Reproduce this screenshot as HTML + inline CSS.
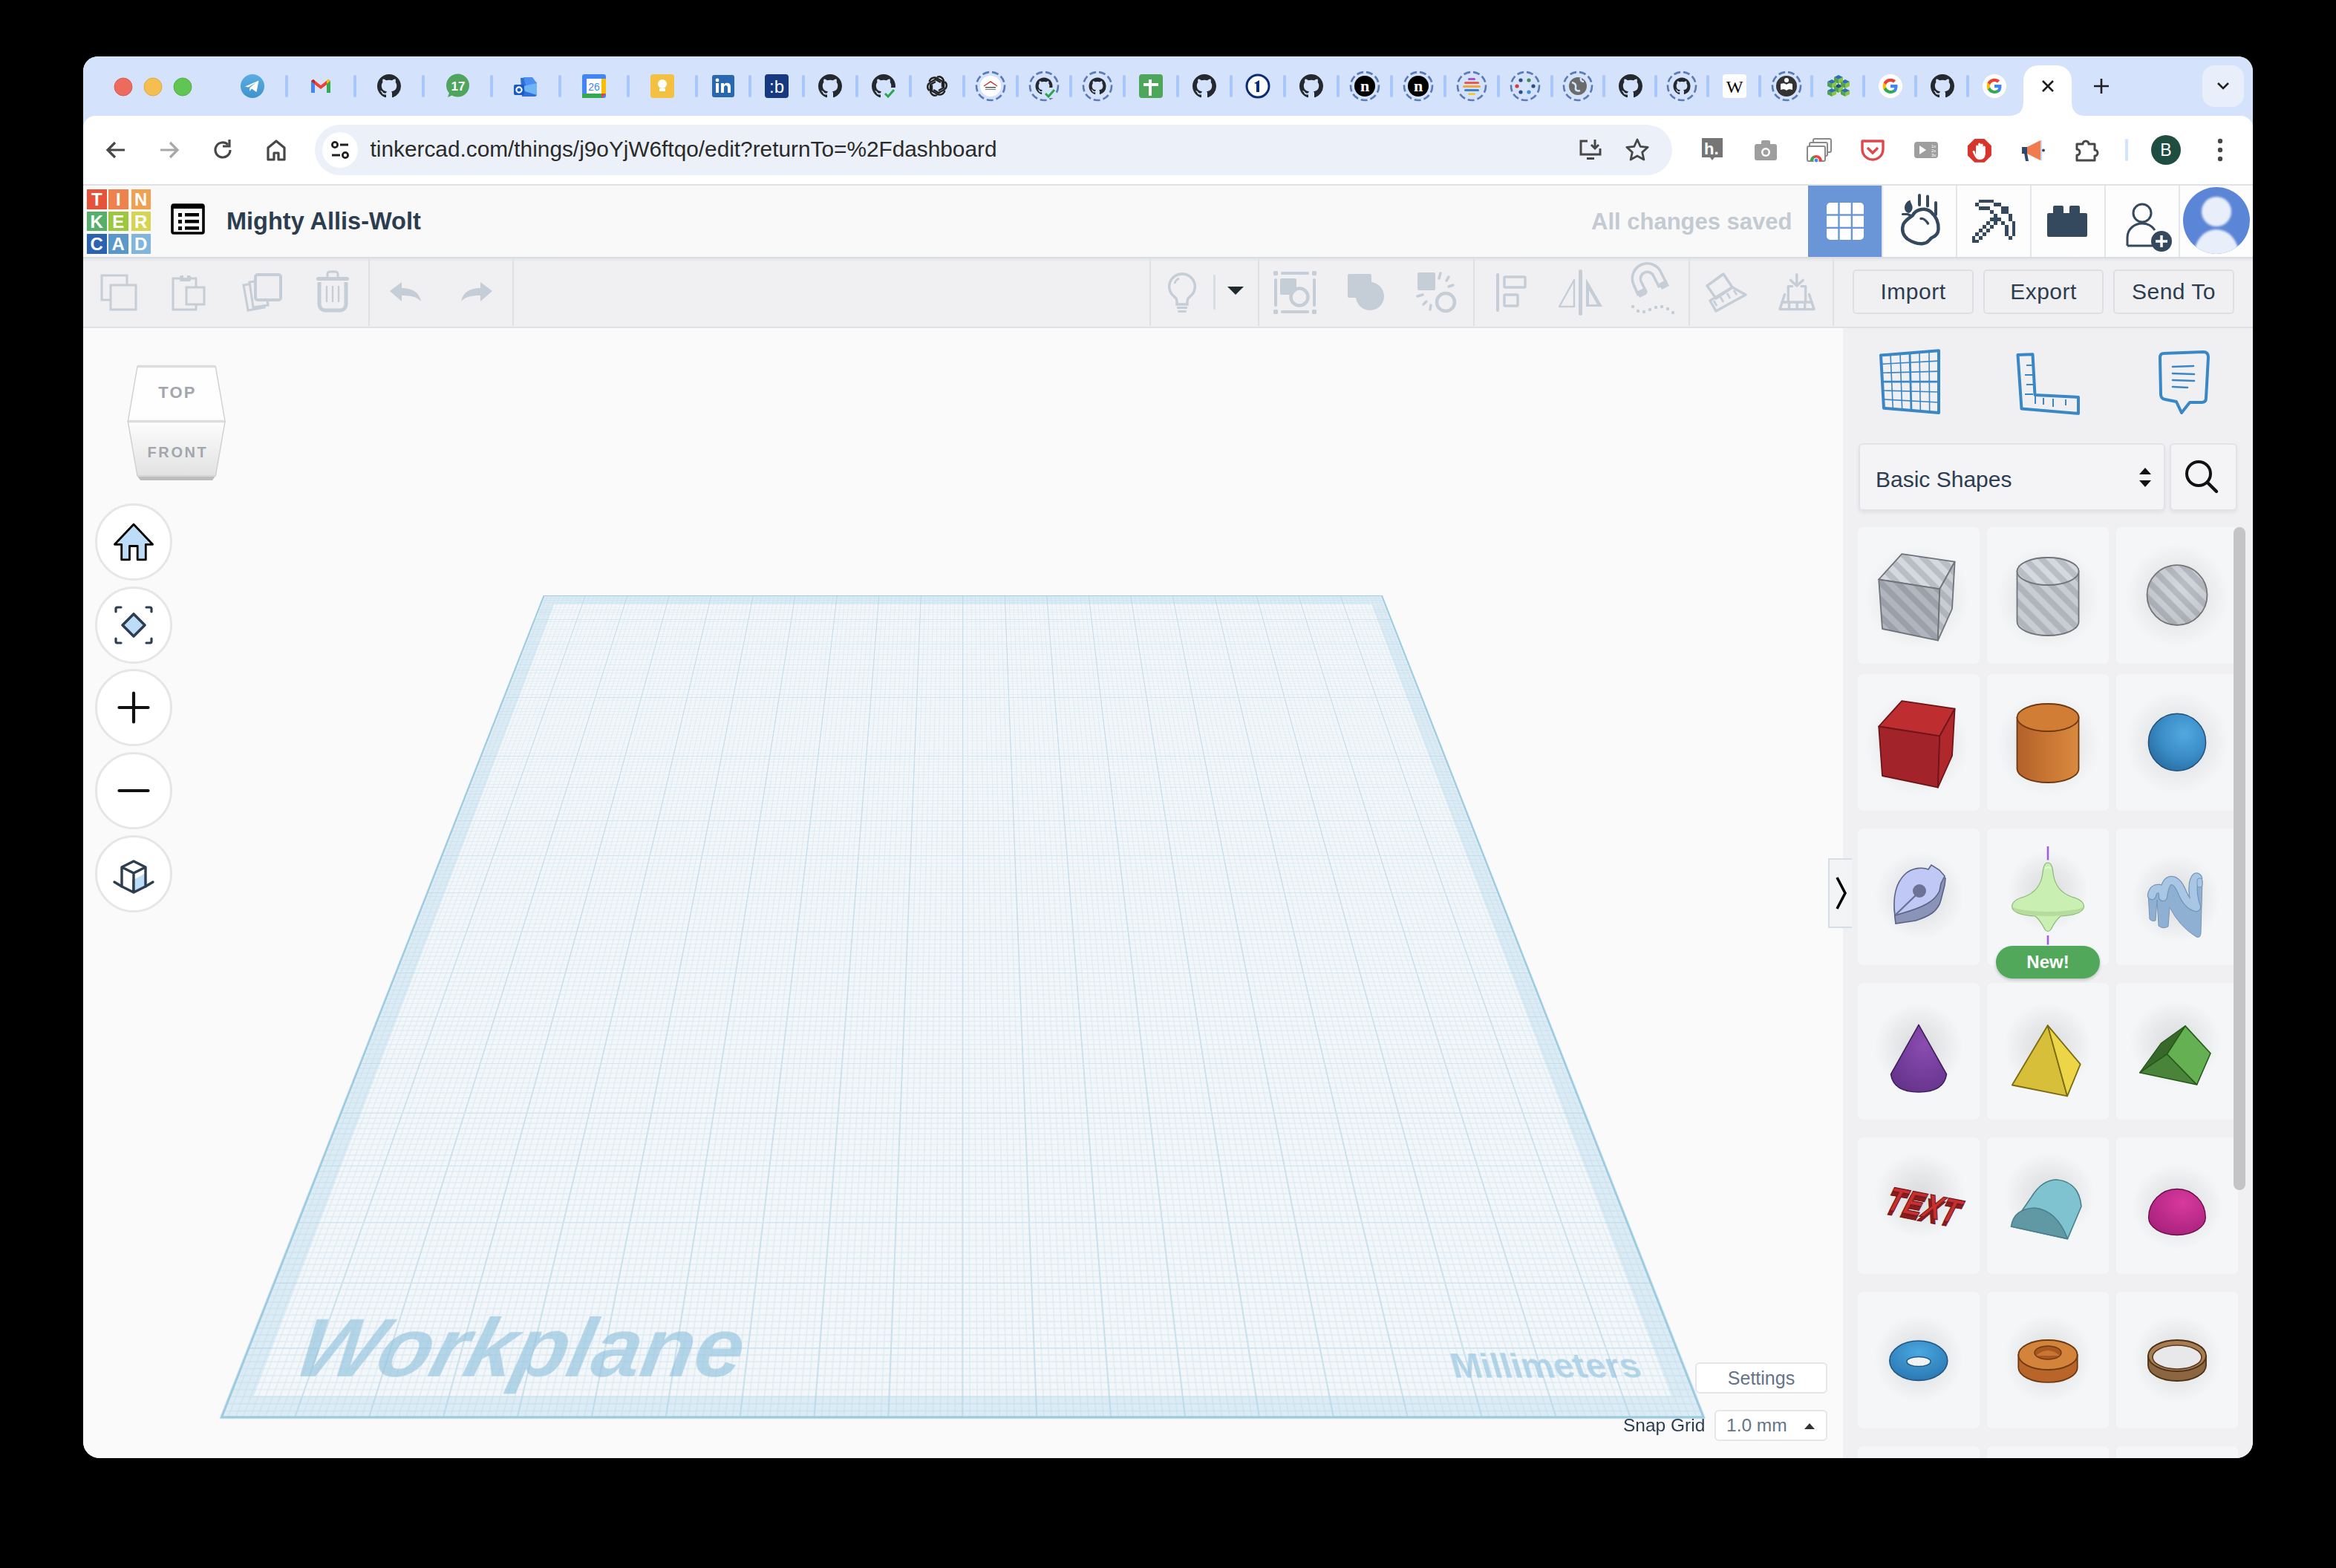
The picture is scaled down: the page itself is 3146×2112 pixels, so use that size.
<!DOCTYPE html><html><head><meta charset="utf-8"><style>
html,body{margin:0;padding:0;width:3146px;height:2112px;background:#000;overflow:hidden;font-family:"Liberation Sans",sans-serif;}
#win{position:absolute;left:112px;top:76px;width:2922px;height:1888px;border-radius:20px 20px 22px 22px;overflow:hidden;background:#fafafa;}
#p{position:absolute;left:-112px;top:-76px;width:3146px;height:2112px;}
.a{position:absolute;}
svg{position:absolute;overflow:visible;}
</style></head><body><div id="win"><div id="p"><div class="a" style="left:112px;top:76px;width:2922px;height:110px;background:#d5e2fb"></div><div class="a" style="left:112px;top:248px;width:2922px;height:2px;background:#dfe1e5"></div><div class="a" style="left:112px;top:250px;width:2922px;height:96px;background:#f9f9fa"></div><div class="a" style="left:112px;top:346px;width:2922px;height:94px;background:linear-gradient(#d5d8de 0px,#e6e7eb 3px,#f0f0f3 7px,#f0f0f3 100%)"></div><div class="a" style="left:112px;top:440px;width:2922px;height:2px;background:#dde1e6"></div><div class="a" style="left:112px;top:442px;width:2370px;height:1522px;background:#fafafa"></div><div class="a" style="left:2482px;top:442px;width:552px;height:1522px;background:#f0f0f3"></div><svg style="left:153px;top:103.5px" width="26" height="26" viewBox="0 0 26 26"><circle cx="13" cy="13" r="12" fill="#ed6a5e" stroke="#d25445" stroke-width="0.8"/></svg><svg style="left:193px;top:103.5px" width="26" height="26" viewBox="0 0 26 26"><circle cx="13" cy="13" r="12" fill="#f5bf4f" stroke="#d6a13c" stroke-width="0.8"/></svg><svg style="left:233px;top:103.5px" width="26" height="26" viewBox="0 0 26 26"><circle cx="13" cy="13" r="12" fill="#61c554" stroke="#4aa63e" stroke-width="0.8"/></svg><div class="a" style="left:384px;top:101px;width:4px;height:30px;border-radius:2px;background:#a8c7fa"></div><div class="a" style="left:476px;top:101px;width:4px;height:30px;border-radius:2px;background:#a8c7fa"></div><div class="a" style="left:568px;top:101px;width:4px;height:30px;border-radius:2px;background:#a8c7fa"></div><div class="a" style="left:660px;top:101px;width:4px;height:30px;border-radius:2px;background:#a8c7fa"></div><div class="a" style="left:752px;top:101px;width:4px;height:30px;border-radius:2px;background:#a8c7fa"></div><div class="a" style="left:844px;top:101px;width:4px;height:30px;border-radius:2px;background:#a8c7fa"></div><div class="a" style="left:936px;top:101px;width:4px;height:30px;border-radius:2px;background:#a8c7fa"></div><div class="a" style="left:1008px;top:101px;width:4px;height:30px;border-radius:2px;background:#a8c7fa"></div><div class="a" style="left:1080px;top:101px;width:4px;height:30px;border-radius:2px;background:#a8c7fa"></div><div class="a" style="left:1152px;top:101px;width:4px;height:30px;border-radius:2px;background:#a8c7fa"></div><div class="a" style="left:1224px;top:101px;width:4px;height:30px;border-radius:2px;background:#a8c7fa"></div><div class="a" style="left:1296px;top:101px;width:4px;height:30px;border-radius:2px;background:#a8c7fa"></div><div class="a" style="left:1368px;top:101px;width:4px;height:30px;border-radius:2px;background:#a8c7fa"></div><div class="a" style="left:1440px;top:101px;width:4px;height:30px;border-radius:2px;background:#a8c7fa"></div><div class="a" style="left:1512px;top:101px;width:4px;height:30px;border-radius:2px;background:#a8c7fa"></div><div class="a" style="left:1584px;top:101px;width:4px;height:30px;border-radius:2px;background:#a8c7fa"></div><div class="a" style="left:1656px;top:101px;width:4px;height:30px;border-radius:2px;background:#a8c7fa"></div><div class="a" style="left:1728px;top:101px;width:4px;height:30px;border-radius:2px;background:#a8c7fa"></div><div class="a" style="left:1800px;top:101px;width:4px;height:30px;border-radius:2px;background:#a8c7fa"></div><div class="a" style="left:1872px;top:101px;width:4px;height:30px;border-radius:2px;background:#a8c7fa"></div><div class="a" style="left:1944px;top:101px;width:4px;height:30px;border-radius:2px;background:#a8c7fa"></div><div class="a" style="left:2016px;top:101px;width:4px;height:30px;border-radius:2px;background:#a8c7fa"></div><div class="a" style="left:2088px;top:101px;width:4px;height:30px;border-radius:2px;background:#a8c7fa"></div><div class="a" style="left:2158px;top:101px;width:4px;height:30px;border-radius:2px;background:#a8c7fa"></div><div class="a" style="left:2228px;top:101px;width:4px;height:30px;border-radius:2px;background:#a8c7fa"></div><div class="a" style="left:2298px;top:101px;width:4px;height:30px;border-radius:2px;background:#a8c7fa"></div><div class="a" style="left:2368px;top:101px;width:4px;height:30px;border-radius:2px;background:#a8c7fa"></div><div class="a" style="left:2438px;top:101px;width:4px;height:30px;border-radius:2px;background:#a8c7fa"></div><div class="a" style="left:2508px;top:101px;width:4px;height:30px;border-radius:2px;background:#a8c7fa"></div><div class="a" style="left:2578px;top:101px;width:4px;height:30px;border-radius:2px;background:#a8c7fa"></div><div class="a" style="left:2648px;top:101px;width:4px;height:30px;border-radius:2px;background:#a8c7fa"></div><svg style="left:323px;top:99px" width="34" height="34" viewBox="0 0 34 34"><defs><linearGradient id="tg" x1="0" y1="0" x2="0" y2="1"><stop offset="0" stop-color="#5aaee3"/><stop offset="1" stop-color="#3f92cc"/></linearGradient></defs><circle cx="17" cy="17" r="16" fill="url(#tg)"/><path d="M7 17.5L25.5 9.5 22.5 25 16 20.5 13 24 13.5 19 22 12 11.5 18.5Z" fill="#fff"/></svg><svg style="left:415px;top:99px" width="34" height="34" viewBox="0 0 34 34"><path d="M4 10v16h5V15l8 6 8-6v11h5V10l-3-2-10 8-10-8Z" fill="#ea4335"/><path d="M4 10v16h5V14Z" fill="#4285f4"/><path d="M30 10v16h-5V14Z" fill="#34a853"/><path d="M30 10l-3-2-2 1.5V14Z" fill="#fbbc04"/><path d="M4 10l3-2 2 1.5V14Z" fill="#c5221f"/></svg><svg style="left:508px;top:100px" width="32" height="32" viewBox="0 0 32 32"><path d="M8 0C3.58 0 0 3.58 0 8c0 3.54 2.29 6.53 5.47 7.59.4.07.55-.17.55-.38 0-.19-.01-.82-.01-1.49-2.01.37-2.53-.49-2.69-.94-.09-.23-.48-.94-.82-1.13-.28-.15-.68-.52-.01-.53.63-.01 1.08.58 1.23.82.72 1.21 1.87.87 2.33.66.07-.52.28-.87.51-1.07-1.78-.2-3.64-.89-3.64-3.95 0-.87.31-1.59.82-2.15-.08-.2-.36-1.02.08-2.12 0 0 .67-.21 2.2.82.64-.18 1.32-.27 2-.27.68 0 1.36.09 2 .27 1.53-1.04 2.2-.82 2.2-.82.44 1.1.16 1.92.08 2.12.51.56.82 1.27.82 2.15 0 3.07-1.87 3.75-3.65 3.95.29.25.54.73.54 1.48 0 1.07-.01 1.93-.01 2.2 0 .21.15.46.55.38A8.013 8.013 0 0016 8c0-4.42-3.58-8-8-8z" fill="#24292f" transform="scale(2)"/></svg><svg style="left:599px;top:99px" width="34" height="34" viewBox="0 0 34 34"><circle cx="17.5" cy="16" r="15.5" fill="#4fa55e"/><path d="M4 32l3-9 6 5Z" fill="#4fa55e"/><text x="18" y="22.5" text-anchor="middle" font-family="Liberation Sans" font-weight="bold" font-size="17" fill="#fff">17</text></svg><svg style="left:691px;top:99px" width="34" height="34" viewBox="0 0 34 34"><path d="M10 6l14-1 8 8v15c0 2-1 3-3 3H12Z" fill="#2f6fd6"/><path d="M14 5l12 0 6 8-14 6Z" fill="#4c8ff0"/><path d="M14 17l18-4v16l-16-5Z" fill="#6eb5f5"/><rect x="1" y="15" width="14" height="14" rx="2" fill="#1a5ac4"/><circle cx="8" cy="22" r="3.6" fill="none" stroke="#fff" stroke-width="2.2"/></svg><svg style="left:783px;top:99px" width="34" height="34" viewBox="0 0 34 34"><rect x="1" y="1" width="32" height="32" rx="3" fill="#4285f4"/><rect x="7" y="7" width="20" height="20" fill="#fff"/><rect x="1" y="27" width="26" height="6" fill="#34a853"/><rect x="27" y="7" width="6" height="20" fill="#fbbc04"/><path d="M27 27h6l-6 6Z" fill="#ea4335"/><text x="17" y="23" text-anchor="middle" font-family="Liberation Sans" font-size="14" fill="#4285f4">26</text></svg><svg style="left:875px;top:99px" width="34" height="34" viewBox="0 0 34 34"><rect x="1" y="1" width="32" height="32" rx="4" fill="#f4c042"/><circle cx="17" cy="14" r="6" fill="#fff"/><rect x="13" y="20" width="8" height="4" fill="#fff"/></svg><svg style="left:959px;top:101px" width="30" height="30" viewBox="0 0 30 30"><rect x="0" y="0" width="30" height="30" rx="3" fill="#2867b2"/><rect x="5" y="11" width="4" height="13" fill="#fff"/><circle cx="7" cy="7" r="2.4" fill="#fff"/><path d="M12 11h4v2c1-2 3-2.5 5-2.3 3 .4 4 2.5 4 5.5V24h-4v-7c0-2-1-3-2.5-3S16 15 16 17v7h-4Z" fill="#fff"/></svg><svg style="left:1029px;top:99px" width="34" height="34" viewBox="0 0 34 34"><rect x="1" y="1" width="32" height="32" rx="4" fill="#16397f"/><text x="17" y="26" text-anchor="middle" font-family="Liberation Sans" font-size="24" fill="#fff">:b</text></svg><svg style="left:1102px;top:100px" width="32" height="32" viewBox="0 0 32 32"><path d="M8 0C3.58 0 0 3.58 0 8c0 3.54 2.29 6.53 5.47 7.59.4.07.55-.17.55-.38 0-.19-.01-.82-.01-1.49-2.01.37-2.53-.49-2.69-.94-.09-.23-.48-.94-.82-1.13-.28-.15-.68-.52-.01-.53.63-.01 1.08.58 1.23.82.72 1.21 1.87.87 2.33.66.07-.52.28-.87.51-1.07-1.78-.2-3.64-.89-3.64-3.95 0-.87.31-1.59.82-2.15-.08-.2-.36-1.02.08-2.12 0 0 .67-.21 2.2.82.64-.18 1.32-.27 2-.27.68 0 1.36.09 2 .27 1.53-1.04 2.2-.82 2.2-.82.44 1.1.16 1.92.08 2.12.51.56.82 1.27.82 2.15 0 3.07-1.87 3.75-3.65 3.95.29.25.54.73.54 1.48 0 1.07-.01 1.93-.01 2.2 0 .21.15.46.55.38A8.013 8.013 0 0016 8c0-4.42-3.58-8-8-8z" fill="#24292f" transform="scale(2)"/></svg><svg style="left:1170px;top:96px" width="40" height="40" viewBox="0 0 40 40"><g transform="translate(4,4) scale(2)"><path d="M8 0C3.58 0 0 3.58 0 8c0 3.54 2.29 6.53 5.47 7.59.4.07.55-.17.55-.38 0-.19-.01-.82-.01-1.49-2.01.37-2.53-.49-2.69-.94-.09-.23-.48-.94-.82-1.13-.28-.15-.68-.52-.01-.53.63-.01 1.08.58 1.23.82.72 1.21 1.87.87 2.33.66.07-.52.28-.87.51-1.07-1.78-.2-3.64-.89-3.64-3.95 0-.87.31-1.59.82-2.15-.08-.2-.36-1.02.08-2.12 0 0 .67-.21 2.2.82.64-.18 1.32-.27 2-.27.68 0 1.36.09 2 .27 1.53-1.04 2.2-.82 2.2-.82.44 1.1.16 1.92.08 2.12.51.56.82 1.27.82 2.15 0 3.07-1.87 3.75-3.65 3.95.29.25.54.73.54 1.48 0 1.07-.01 1.93-.01 2.2 0 .21.15.46.55.38A8.013 8.013 0 0016 8c0-4.42-3.58-8-8-8z" fill="#24292f"/></g><rect x="20" y="22" width="16" height="14" fill="#d3e3fd"/><path d="M22 30l4 4 8-9" stroke="#2da44e" stroke-width="3" fill="none"/></svg><svg style="left:1245px;top:99px" width="34" height="34" viewBox="0 0 34 34"><g fill="none" stroke="#222" stroke-width="2.4"><path d="M17 5c4-2 9 1 9 6v8l-7 4"/><path d="M27.4 11c3.5 3 3.2 8.7-1.2 11l-7 4-7-4"/><path d="M27.4 23c-.8 4.5-6 7-10.4 4.5l-7-4V15.5"/><path d="M17 29c-4 2-9-1-9-6v-8l7-4"/><path d="M6.6 23c-3.5-3-3.2-8.7 1.2-11l7-4 7 4"/><path d="M6.6 11c.8-4.5 6-7 10.4-4.5l7 4v8"/></g></svg><svg style="left:1314px;top:96px" width="40" height="40" viewBox="0 0 40 40"><circle cx="20" cy="20" r="19" fill="none" stroke="#5a7bb5" stroke-width="2.6" stroke-dasharray="9 4"/><circle cx="20" cy="20" r="14" fill="#fff"/><path d="M11 20l9-6 9 6" stroke="#c0392b" stroke-width="1.5" fill="none"/><rect x="13" y="21" width="14" height="1.5" fill="#555"/><rect x="13" y="24" width="14" height="1" fill="#777"/></svg><svg style="left:1386px;top:96px" width="40" height="40" viewBox="0 0 40 40"><circle cx="20" cy="20" r="19" fill="none" stroke="#5a7bb5" stroke-width="2.6" stroke-dasharray="9 4"/><g transform="translate(8.5,8.5) scale(1.44)"><path d="M8 0C3.58 0 0 3.58 0 8c0 3.54 2.29 6.53 5.47 7.59.4.07.55-.17.55-.38 0-.19-.01-.82-.01-1.49-2.01.37-2.53-.49-2.69-.94-.09-.23-.48-.94-.82-1.13-.28-.15-.68-.52-.01-.53.63-.01 1.08.58 1.23.82.72 1.21 1.87.87 2.33.66.07-.52.28-.87.51-1.07-1.78-.2-3.64-.89-3.64-3.95 0-.87.31-1.59.82-2.15-.08-.2-.36-1.02.08-2.12 0 0 .67-.21 2.2.82.64-.18 1.32-.27 2-.27.68 0 1.36.09 2 .27 1.53-1.04 2.2-.82 2.2-.82.44 1.1.16 1.92.08 2.12.51.56.82 1.27.82 2.15 0 3.07-1.87 3.75-3.65 3.95.29.25.54.73.54 1.48 0 1.07-.01 1.93-.01 2.2 0 .21.15.46.55.38A8.013 8.013 0 0016 8c0-4.42-3.58-8-8-8z" fill="#24292f"/></g><rect x="20" y="22" width="16" height="14" fill="#d3e3fd"/><path d="M22 30l4 4 8-9" stroke="#2da44e" stroke-width="3" fill="none"/></svg><svg style="left:1458px;top:96px" width="40" height="40" viewBox="0 0 40 40"><circle cx="20" cy="20" r="19" fill="none" stroke="#5a7bb5" stroke-width="2.6" stroke-dasharray="9 4"/><g transform="translate(8.5,8.5) scale(1.44)"><path d="M8 0C3.58 0 0 3.58 0 8c0 3.54 2.29 6.53 5.47 7.59.4.07.55-.17.55-.38 0-.19-.01-.82-.01-1.49-2.01.37-2.53-.49-2.69-.94-.09-.23-.48-.94-.82-1.13-.28-.15-.68-.52-.01-.53.63-.01 1.08.58 1.23.82.72 1.21 1.87.87 2.33.66.07-.52.28-.87.51-1.07-1.78-.2-3.64-.89-3.64-3.95 0-.87.31-1.59.82-2.15-.08-.2-.36-1.02.08-2.12 0 0 .67-.21 2.2.82.64-.18 1.32-.27 2-.27.68 0 1.36.09 2 .27 1.53-1.04 2.2-.82 2.2-.82.44 1.1.16 1.92.08 2.12.51.56.82 1.27.82 2.15 0 3.07-1.87 3.75-3.65 3.95.29.25.54.73.54 1.48 0 1.07-.01 1.93-.01 2.2 0 .21.15.46.55.38A8.013 8.013 0 0016 8c0-4.42-3.58-8-8-8z" fill="#24292f"/></g></svg><svg style="left:1533px;top:99px" width="34" height="34" viewBox="0 0 34 34"><rect x="1" y="1" width="32" height="32" rx="4" fill="#4ca75a"/><rect x="7" y="13" width="20" height="4" fill="#fff"/><rect x="14" y="8" width="4" height="22" fill="#fff"/></svg><svg style="left:1606px;top:100px" width="32" height="32" viewBox="0 0 32 32"><path d="M8 0C3.58 0 0 3.58 0 8c0 3.54 2.29 6.53 5.47 7.59.4.07.55-.17.55-.38 0-.19-.01-.82-.01-1.49-2.01.37-2.53-.49-2.69-.94-.09-.23-.48-.94-.82-1.13-.28-.15-.68-.52-.01-.53.63-.01 1.08.58 1.23.82.72 1.21 1.87.87 2.33.66.07-.52.28-.87.51-1.07-1.78-.2-3.64-.89-3.64-3.95 0-.87.31-1.59.82-2.15-.08-.2-.36-1.02.08-2.12 0 0 .67-.21 2.2.82.64-.18 1.32-.27 2-.27.68 0 1.36.09 2 .27 1.53-1.04 2.2-.82 2.2-.82.44 1.1.16 1.92.08 2.12.51.56.82 1.27.82 2.15 0 3.07-1.87 3.75-3.65 3.95.29.25.54.73.54 1.48 0 1.07-.01 1.93-.01 2.2 0 .21.15.46.55.38A8.013 8.013 0 0016 8c0-4.42-3.58-8-8-8z" fill="#24292f" transform="scale(2)"/></svg><svg style="left:1677px;top:99px" width="34" height="34" viewBox="0 0 34 34"><circle cx="17" cy="17" r="15" fill="#fff" stroke="#0b2c7a" stroke-width="3"/><path d="M12 13l7-4v16h-4V14Z" fill="#0b2c7a"/></svg><svg style="left:1750px;top:100px" width="32" height="32" viewBox="0 0 32 32"><path d="M8 0C3.58 0 0 3.58 0 8c0 3.54 2.29 6.53 5.47 7.59.4.07.55-.17.55-.38 0-.19-.01-.82-.01-1.49-2.01.37-2.53-.49-2.69-.94-.09-.23-.48-.94-.82-1.13-.28-.15-.68-.52-.01-.53.63-.01 1.08.58 1.23.82.72 1.21 1.87.87 2.33.66.07-.52.28-.87.51-1.07-1.78-.2-3.64-.89-3.64-3.95 0-.87.31-1.59.82-2.15-.08-.2-.36-1.02.08-2.12 0 0 .67-.21 2.2.82.64-.18 1.32-.27 2-.27.68 0 1.36.09 2 .27 1.53-1.04 2.2-.82 2.2-.82.44 1.1.16 1.92.08 2.12.51.56.82 1.27.82 2.15 0 3.07-1.87 3.75-3.65 3.95.29.25.54.73.54 1.48 0 1.07-.01 1.93-.01 2.2 0 .21.15.46.55.38A8.013 8.013 0 0016 8c0-4.42-3.58-8-8-8z" fill="#24292f" transform="scale(2)"/></svg><svg style="left:1818px;top:96px" width="40" height="40" viewBox="0 0 40 40"><circle cx="20" cy="20" r="19" fill="none" stroke="#5a7bb5" stroke-width="2.6" stroke-dasharray="9 4"/><circle cx="20" cy="20" r="14" fill="#000"/><text x="20" y="27" text-anchor="middle" font-family="Liberation Serif" font-weight="bold" font-size="22" fill="#fff">n</text></svg><svg style="left:1890px;top:96px" width="40" height="40" viewBox="0 0 40 40"><circle cx="20" cy="20" r="19" fill="none" stroke="#5a7bb5" stroke-width="2.6" stroke-dasharray="9 4"/><circle cx="20" cy="20" r="14" fill="#000"/><text x="20" y="27" text-anchor="middle" font-family="Liberation Serif" font-weight="bold" font-size="22" fill="#fff">n</text></svg><svg style="left:1962px;top:96px" width="40" height="40" viewBox="0 0 40 40"><circle cx="20" cy="20" r="19" fill="none" stroke="#5a7bb5" stroke-width="2.6" stroke-dasharray="9 4"/><rect x="15" y="9" width="10" height="3" rx="1.5" fill="#a855c8"/><rect x="10" y="14" width="20" height="3" rx="1.5" fill="#e55b4d"/><rect x="8" y="19" width="24" height="3" rx="1.5" fill="#f0a63a"/><rect x="10" y="24" width="20" height="3" rx="1.5" fill="#3b82d6"/><rect x="15" y="29" width="10" height="3" rx="1.5" fill="#f3c93b"/></svg><svg style="left:2034px;top:96px" width="40" height="40" viewBox="0 0 40 40"><circle cx="20" cy="20" r="19" fill="none" stroke="#5a7bb5" stroke-width="2.6" stroke-dasharray="9 4"/><circle cx="14" cy="12" r="2.6" fill="#2d4e8a"/><circle cx="25" cy="12" r="2.6" fill="#3a8a5c"/><circle cx="9" cy="20" r="2.6" fill="#d63b3b"/><circle cx="31" cy="20" r="2.6" fill="#2d4e8a"/><circle cx="14" cy="28" r="2.6" fill="#2d4e8a"/><circle cx="25" cy="28" r="2.6" fill="#3b90d6"/></svg><svg style="left:2105px;top:96px" width="40" height="40" viewBox="0 0 40 40"><circle cx="20" cy="20" r="19" fill="none" stroke="#5a7bb5" stroke-width="2.6" stroke-dasharray="9 4"/><circle cx="20" cy="20" r="12" fill="#6b6b6b"/><path d="M12 15c4 1 6 3 5 7s3 5 6 4M24 9c-1 3 1 5 4 5" stroke="#d3e3fd" stroke-width="2.5" fill="none"/></svg><svg style="left:2180px;top:100px" width="32" height="32" viewBox="0 0 32 32"><path d="M8 0C3.58 0 0 3.58 0 8c0 3.54 2.29 6.53 5.47 7.59.4.07.55-.17.55-.38 0-.19-.01-.82-.01-1.49-2.01.37-2.53-.49-2.69-.94-.09-.23-.48-.94-.82-1.13-.28-.15-.68-.52-.01-.53.63-.01 1.08.58 1.23.82.72 1.21 1.87.87 2.33.66.07-.52.28-.87.51-1.07-1.78-.2-3.64-.89-3.64-3.95 0-.87.31-1.59.82-2.15-.08-.2-.36-1.02.08-2.12 0 0 .67-.21 2.2.82.64-.18 1.32-.27 2-.27.68 0 1.36.09 2 .27 1.53-1.04 2.2-.82 2.2-.82.44 1.1.16 1.92.08 2.12.51.56.82 1.27.82 2.15 0 3.07-1.87 3.75-3.65 3.95.29.25.54.73.54 1.48 0 1.07-.01 1.93-.01 2.2 0 .21.15.46.55.38A8.013 8.013 0 0016 8c0-4.42-3.58-8-8-8z" fill="#24292f" transform="scale(2)"/></svg><svg style="left:2245px;top:96px" width="40" height="40" viewBox="0 0 40 40"><circle cx="20" cy="20" r="19" fill="none" stroke="#5a7bb5" stroke-width="2.6" stroke-dasharray="9 4"/><g transform="translate(8.5,8.5) scale(1.44)"><path d="M8 0C3.58 0 0 3.58 0 8c0 3.54 2.29 6.53 5.47 7.59.4.07.55-.17.55-.38 0-.19-.01-.82-.01-1.49-2.01.37-2.53-.49-2.69-.94-.09-.23-.48-.94-.82-1.13-.28-.15-.68-.52-.01-.53.63-.01 1.08.58 1.23.82.72 1.21 1.87.87 2.33.66.07-.52.28-.87.51-1.07-1.78-.2-3.64-.89-3.64-3.95 0-.87.31-1.59.82-2.15-.08-.2-.36-1.02.08-2.12 0 0 .67-.21 2.2.82.64-.18 1.32-.27 2-.27.68 0 1.36.09 2 .27 1.53-1.04 2.2-.82 2.2-.82.44 1.1.16 1.92.08 2.12.51.56.82 1.27.82 2.15 0 3.07-1.87 3.75-3.65 3.95.29.25.54.73.54 1.48 0 1.07-.01 1.93-.01 2.2 0 .21.15.46.55.38A8.013 8.013 0 0016 8c0-4.42-3.58-8-8-8z" fill="#24292f"/></g></svg><svg style="left:2319px;top:99px" width="34" height="34" viewBox="0 0 34 34"><rect x="1" y="1" width="32" height="32" rx="4" fill="#fff"/><text x="17" y="26" text-anchor="middle" font-family="Liberation Serif" font-size="24" fill="#000">W</text></svg><svg style="left:2386px;top:96px" width="40" height="40" viewBox="0 0 40 40"><circle cx="20" cy="20" r="19" fill="none" stroke="#5a7bb5" stroke-width="2.6" stroke-dasharray="9 4"/><circle cx="20" cy="20" r="14" fill="#333"/><path d="M12 17v8c3-1 6-1 8 1 2-2 5-2 8-1v-8c-3-1-6-1-8 1-2-2-5-2-8-1Z" fill="#fff"/><circle cx="20" cy="12" r="3" fill="#fff"/></svg><svg style="left:2459px;top:99px" width="34" height="34" viewBox="0 0 34 34"><g><path d="M17 2l6 3-6 3-6-3Z" fill="#2b6fb6"/><path d="M8 8l6 3-6 3-6-3Z" fill="#2b6fb6"/><path d="M26 8l6 3-6 3-6-3Z" fill="#2b6fb6"/><path d="M17 14l6 3-6 3-6-3Z" fill="#1d4f8a"/><path d="M11 5v6l6 3V8Z" fill="#4fa34a"/><path d="M23 5v6l-6 3V8Z" fill="#8cc63f"/><path d="M2 11v6l6 3v-6Z" fill="#4fa34a"/><path d="M14 11v6l-6 3v-6Z" fill="#8cc63f"/><path d="M20 11v6l6 3v-6Z" fill="#4fa34a"/><path d="M32 11v6l-6 3v-6Z" fill="#8cc63f"/><path d="M11 17v6l6 3v-6Z" fill="#4fa34a"/><path d="M23 17v6l-6 3v-6Z" fill="#8cc63f"/><path d="M8 20l6 3-6 3-6-3Z" fill="#2b6fb6"/><path d="M26 20l6 3-6 3-6-3Z" fill="#2b6fb6"/><path d="M2 23v5l6 3v-5Z" fill="#4fa34a"/><path d="M14 23v5l-6 3v-5Z" fill="#8cc63f"/><path d="M20 23v5l6 3v-5Z" fill="#4fa34a"/><path d="M32 23v5l-6 3v-5Z" fill="#8cc63f"/></g></svg><svg style="left:2529px;top:99px" width="34" height="34" viewBox="0 0 34 34"><circle cx="17" cy="17" r="16" fill="#fff"/><path d="M26.5 17.3c0-.8-.1-1.5-.2-2.2H17v4.2h5.3c-.2 1.3-1 2.4-2.1 3.1v2.6h3.4c2-1.8 2.9-4.5 2.9-7.7Z" fill="#4285f4"/><path d="M17 27c2.8 0 5.2-.9 6.9-2.5l-3.4-2.6c-.9.6-2.1 1-3.5 1-2.7 0-5-1.8-5.8-4.3H7.7v2.7C9.4 24.7 13 27 17 27Z" fill="#34a853"/><path d="M11.2 18.6c-.2-.6-.3-1.2-.3-1.8s.1-1.2.3-1.8v-2.7H7.7C7 13.7 6.6 15.3 6.6 17s.4 3.3 1.1 4.7Z" fill="#fbbc04"/><path d="M17 10.9c1.5 0 2.9.5 4 1.6l3-3C22.2 7.8 19.8 6.8 17 6.8c-4 0-7.6 2.3-9.3 5.6l3.5 2.7c.8-2.5 3.1-4.2 5.8-4.2Z" fill="#ea4335"/></svg><svg style="left:2600px;top:100px" width="32" height="32" viewBox="0 0 32 32"><path d="M8 0C3.58 0 0 3.58 0 8c0 3.54 2.29 6.53 5.47 7.59.4.07.55-.17.55-.38 0-.19-.01-.82-.01-1.49-2.01.37-2.53-.49-2.69-.94-.09-.23-.48-.94-.82-1.13-.28-.15-.68-.52-.01-.53.63-.01 1.08.58 1.23.82.72 1.21 1.87.87 2.33.66.07-.52.28-.87.51-1.07-1.78-.2-3.64-.89-3.64-3.95 0-.87.31-1.59.82-2.15-.08-.2-.36-1.02.08-2.12 0 0 .67-.21 2.2.82.64-.18 1.32-.27 2-.27.68 0 1.36.09 2 .27 1.53-1.04 2.2-.82 2.2-.82.44 1.1.16 1.92.08 2.12.51.56.82 1.27.82 2.15 0 3.07-1.87 3.75-3.65 3.95.29.25.54.73.54 1.48 0 1.07-.01 1.93-.01 2.2 0 .21.15.46.55.38A8.013 8.013 0 0016 8c0-4.42-3.58-8-8-8z" fill="#24292f" transform="scale(2)"/></svg><svg style="left:2669px;top:99px" width="34" height="34" viewBox="0 0 34 34"><circle cx="17" cy="17" r="16" fill="#fff"/><path d="M26.5 17.3c0-.8-.1-1.5-.2-2.2H17v4.2h5.3c-.2 1.3-1 2.4-2.1 3.1v2.6h3.4c2-1.8 2.9-4.5 2.9-7.7Z" fill="#4285f4"/><path d="M17 27c2.8 0 5.2-.9 6.9-2.5l-3.4-2.6c-.9.6-2.1 1-3.5 1-2.7 0-5-1.8-5.8-4.3H7.7v2.7C9.4 24.7 13 27 17 27Z" fill="#34a853"/><path d="M11.2 18.6c-.2-.6-.3-1.2-.3-1.8s.1-1.2.3-1.8v-2.7H7.7C7 13.7 6.6 15.3 6.6 17s.4 3.3 1.1 4.7Z" fill="#fbbc04"/><path d="M17 10.9c1.5 0 2.9.5 4 1.6l3-3C22.2 7.8 19.8 6.8 17 6.8c-4 0-7.6 2.3-9.3 5.6l3.5 2.7c.8-2.5 3.1-4.2 5.8-4.2Z" fill="#ea4335"/></svg><div class="a" style="left:2725px;top:88px;width:65px;height:70px;background:#fff;border-radius:20px 20px 0 0"></div><svg style="left:2705px;top:136px" width="105" height="20" viewBox="0 0 105 20"><path d="M0 20C14 20 20 14 20 0V20Z" fill="#fff"/><path d="M85 0C85 14 91 20 105 20H85Z" fill="#fff"/></svg><svg style="left:2746px;top:104px" width="24" height="24" viewBox="0 0 24 24"><path d="M5 5L19 19M19 5L5 19" stroke="#1f1f1f" stroke-width="2.6"/></svg><svg style="left:2816px;top:102px" width="28" height="28" viewBox="0 0 28 28"><path d="M14 4V24M4 14H24" stroke="#1f1f1f" stroke-width="2.6"/></svg><div class="a" style="left:2966px;top:88px;width:56px;height:56px;border-radius:16px;background:#e8effb"></div><svg style="left:2982px;top:104px" width="24" height="24" viewBox="0 0 24 24"><path d="M5 8L12 15L19 8" stroke="#1f1f1f" stroke-width="2.6" fill="none"/></svg><div class="a" style="left:112px;top:156px;width:2922px;height:92px;background:#fff;border-radius:16px 16px 0 0"></div><svg style="left:138px;top:184px" width="36" height="36" viewBox="0 0 36 36"><path d="M30 18H7M17 8L7 18l10 10" stroke="#474747" stroke-width="3.2" fill="none"/></svg><svg style="left:210px;top:184px" width="36" height="36" viewBox="0 0 36 36"><path d="M6 18H29M19 8l10 10-10 10" stroke="#a8a8a8" stroke-width="3.2" fill="none"/></svg><svg style="left:282px;top:184px" width="36" height="36" viewBox="0 0 36 36"><path d="M28 18a10 10 0 1 1-3-7.2" stroke="#474747" stroke-width="3.2" fill="none"/><path d="M27 4v9h-9" stroke="#474747" stroke-width="3.2" fill="none"/></svg><svg style="left:354px;top:184px" width="36" height="36" viewBox="0 0 36 36"><path d="M7 31V15L18 6l11 9v16h-8v-9h-6v9Z" stroke="#474747" stroke-width="3.2" fill="none" stroke-linejoin="round"/></svg><div class="a" style="left:424px;top:168px;width:1828px;height:68px;border-radius:34px;background:#ecf1f9"></div><div class="a" style="left:434px;top:178px;width:48px;height:48px;border-radius:24px;background:#fff"></div><svg style="left:442px;top:186px" width="32" height="32" viewBox="0 0 32 32"><circle cx="9" cy="9" r="3.6" stroke="#1f1f1f" stroke-width="2.8" fill="none"/><path d="M16 9H27" stroke="#1f1f1f" stroke-width="2.8"/><circle cx="23" cy="23" r="3.6" stroke="#1f1f1f" stroke-width="2.8" fill="none"/><path d="M5 23H16" stroke="#1f1f1f" stroke-width="2.8"/></svg><div class="a" style="left:498.6px;top:183px;font-size:29.8px;line-height:36px;color:#2a2a2a;white-space:nowrap">tinkercad.com/things/j9oYjW6ftqo/edit?returnTo=%2Fdashboard</div><svg style="left:2124px;top:184px" width="36" height="36" viewBox="0 0 36 36"><path d="M14 6H5v18h26v-8" stroke="#474747" stroke-width="3" fill="none"/><path d="M13 28h10v3H13Z" fill="#474747"/><path d="M24 4v12M19 11l5 5 5-5" stroke="#474747" stroke-width="3" fill="none"/></svg><svg style="left:2187px;top:184px" width="36" height="36" viewBox="0 0 36 36"><path d="M18 4l4.2 9.3 10 1-7.5 6.8 2.2 9.9L18 26l-8.9 5 2.2-9.9L3.8 14.3l10-1Z" stroke="#474747" stroke-width="2.8" fill="none" stroke-linejoin="round"/></svg><svg style="left:2290px;top:184px" width="32" height="36" viewBox="0 0 32 36"><path d="M2 2h28v26H19l-3 4-3-4H2Z" fill="#757575"/><text x="5" y="24" font-family="Liberation Sans" font-weight="bold" font-size="22" fill="#fff">h.</text></svg><svg style="left:2362px;top:186px" width="32" height="32" viewBox="0 0 32 32"><rect x="1" y="8" width="30" height="22" rx="3" fill="#9e9e9e"/><rect x="10" y="3" width="12" height="7" rx="2" fill="#9e9e9e"/><circle cx="16" cy="19" r="6" fill="#fff"/><circle cx="16" cy="19" r="3.5" fill="#9e9e9e"/></svg><svg style="left:2433px;top:185px" width="34" height="34" viewBox="0 0 34 34"><rect x="9" y="2" width="24" height="18" rx="2" fill="#fff" stroke="#8a8a8a" stroke-width="2"/><rect x="4" y="7" width="24" height="18" rx="2" fill="#fff" stroke="#8a8a8a" stroke-width="2"/><rect x="1" y="12" width="24" height="20" rx="2" fill="#fff" stroke="#8a8a8a" stroke-width="2"/><path d="M5 32a8 8 0 0 1 16 0Z" fill="#ea4335"/><path d="M5 32a8 8 0 0 1 4-7l4 7Z" fill="#34a853"/><circle cx="13" cy="31" r="3" fill="#4285f4" stroke="#fff" stroke-width="1.2"/></svg><svg style="left:2505px;top:185px" width="34" height="34" viewBox="0 0 34 34"><path d="M3 5h28v11a14 14 0 0 1-28 0Z" fill="none" stroke="#e0474c" stroke-width="3.4" stroke-linejoin="round"/><path d="M10 14l7 7 7-7" stroke="#e0474c" stroke-width="3.4" fill="none"/></svg><svg style="left:2577px;top:185px" width="34" height="34" viewBox="0 0 34 34"><rect x="1" y="6" width="32" height="22" rx="4" fill="#9e9e9e"/><path d="M8 11l9 6-9 6Z" fill="#fff"/><text x="24" y="14" font-family="Liberation Sans" font-size="6" fill="#fff">1x</text><text x="24" y="20" font-family="Liberation Sans" font-size="6" fill="#fff">2x</text><text x="24" y="26" font-family="Liberation Sans" font-size="6" fill="#fff">3x</text></svg><svg style="left:2649px;top:185px" width="34" height="34" viewBox="0 0 34 34"><path d="M10 1h14l10 10v14L24 35H10L0 25V11Z" fill="#d9342b" transform="scale(0.94) translate(1,1)"/><path d="M12 24V12a1.6 1.6 0 0 1 3.2 0v6V9a1.6 1.6 0 0 1 3.2 0v9V10a1.6 1.6 0 0 1 3.2 0v9-6a1.6 1.6 0 0 1 3.2 0v9c0 5-3 8-7 8s-6-2-8-6l-2-4a1.5 1.5 0 0 1 2.6-1.5Z" fill="#fff"/></svg><svg style="left:2720px;top:185px" width="34" height="34" viewBox="0 0 34 34"><path d="M3 13h7v9H3Z" fill="#2f4a68"/><path d="M6 21l2 11h4l-2-11Z" fill="#2f4a68"/><path d="M10 13L28 4v27L10 22Z" fill="#f07c4e"/><rect x="28" y="4" width="2" height="27" fill="#c9d6ef"/><circle cx="32" cy="17.5" r="2" fill="#2f4a68"/></svg><svg style="left:2793px;top:185px" width="34" height="34" viewBox="0 0 34 34"><path d="M4 9h8a4 4 0 0 1 8 0h8v8a4 4 0 0 1 0 8v6H4v-7a4 4 0 0 0 0-8Z" stroke="#474747" stroke-width="3" fill="none" stroke-linejoin="round"/></svg><div class="a" style="left:2862px;top:187px;width:4px;height:30px;border-radius:2px;background:#d3e3fd"></div><div class="a" style="left:2897px;top:182px;width:40px;height:40px;border-radius:20px;background:#1f4e41;color:#fff;font-size:23px;line-height:40px;text-align:center">B</div><svg style="left:2984px;top:184px" width="12" height="36" viewBox="0 0 12 36"><circle cx="6" cy="6" r="3.2" fill="#474747"/><circle cx="6" cy="18" r="3.2" fill="#474747"/><circle cx="6" cy="30" r="3.2" fill="#474747"/></svg><div class="a" style="left:117px;top:255px;width:26.5px;height:26.5px;background:#e5533a;color:#fff;font-weight:bold;font-size:24px;line-height:28px;text-align:center">T</div><div class="a" style="left:146px;top:255px;width:26.5px;height:26.5px;background:#ee824c;color:#fff;font-weight:bold;font-size:24px;line-height:28px;text-align:center">I</div><div class="a" style="left:176.5px;top:255px;width:26.5px;height:26.5px;background:#f0a04e;color:#fff;font-weight:bold;font-size:24px;line-height:28px;text-align:center">N</div><div class="a" style="left:117px;top:284.5px;width:26.5px;height:26.5px;background:#57b06a;color:#fff;font-weight:bold;font-size:24px;line-height:28px;text-align:center">K</div><div class="a" style="left:146px;top:284.5px;width:26.5px;height:26.5px;background:#9dc73e;color:#fff;font-weight:bold;font-size:24px;line-height:28px;text-align:center">E</div><div class="a" style="left:176.5px;top:284.5px;width:26.5px;height:26.5px;background:#d6d453;color:#fff;font-weight:bold;font-size:24px;line-height:28px;text-align:center">R</div><div class="a" style="left:117px;top:315px;width:26.5px;height:26.5px;background:#2b63b0;color:#fff;font-weight:bold;font-size:24px;line-height:28px;text-align:center">C</div><div class="a" style="left:146px;top:315px;width:26.5px;height:26.5px;background:#5a98c9;color:#fff;font-weight:bold;font-size:24px;line-height:28px;text-align:center">A</div><div class="a" style="left:176.5px;top:315px;width:26.5px;height:26.5px;background:#80b6dc;color:#fff;font-weight:bold;font-size:24px;line-height:28px;text-align:center">D</div><svg style="left:230px;top:274px" width="46" height="42" viewBox="0 0 46 42"><rect x="2" y="2" width="42" height="38" rx="2" fill="none" stroke="#000" stroke-width="3.6"/><rect x="2" y="2" width="42" height="5" fill="#000"/><rect x="10" y="13" width="5" height="5" fill="#000"/><rect x="19" y="13" width="19" height="4.5" fill="#000"/><rect x="10" y="22" width="5" height="5" fill="#000"/><rect x="19" y="22" width="19" height="4.5" fill="#000"/><rect x="10" y="31" width="5" height="5" fill="#000"/><rect x="19" y="31" width="19" height="4.5" fill="#000"/></svg><div class="a" style="left:305px;top:278px;font-size:32.5px;line-height:40px;font-weight:bold;color:#2c3d50;white-space:nowrap">Mighty Allis-Wolt</div><div class="a" style="left:2143px;top:279px;font-size:31px;line-height:40px;font-weight:bold;color:#c3cad2;white-space:nowrap">All changes saved</div><div class="a" style="left:2536px;top:250px;width:498px;height:96px;background:#fdfdfd"></div><div class="a" style="left:2435px;top:250px;width:99px;height:96px;background:#6a96d8"></div><div class="a" style="left:2534px;top:250px;width:2px;height:96px;background:#e2e5e9"></div><div class="a" style="left:2634px;top:250px;width:2px;height:96px;background:#e2e5e9"></div><div class="a" style="left:2734px;top:250px;width:2px;height:96px;background:#e2e5e9"></div><div class="a" style="left:2834px;top:250px;width:2px;height:96px;background:#e2e5e9"></div><div class="a" style="left:2934px;top:250px;width:2px;height:96px;background:#e2e5e9"></div><svg style="left:2460px;top:273px" width="50" height="50" viewBox="0 0 50 50"><rect x="0" y="0" width="50" height="50" rx="5" fill="#fff"/><rect x="15.3" y="0" width="2.4" height="50" fill="#6a96d8"/><rect x="32.65" y="0" width="2.4" height="50" fill="#6a96d8"/><rect x="0" y="15.3" width="50" height="2.4" fill="#6a96d8"/><rect x="0" y="32.65" width="50" height="2.4" fill="#6a96d8"/></svg><svg style="left:2550px;top:255px" width="170" height="80" viewBox="2550 255 170 80"><path d="M2576 290C2580 282 2592 279 2600 285C2607 291 2611 300 2610.5 309C2610 315 2607 318 2602 320C2598 322 2598 327 2590 328C2582 329 2575 326 2569 322C2563 317 2561 310 2563 303C2565 297 2571 294 2576 290Z" fill="none" stroke="#34495e" stroke-width="4.4" stroke-linejoin="round"/><path d="M2572.5 269.5C2568 271 2565 275 2565 280C2565 284 2568 287 2571 287C2575 285 2576 281 2575.5 278C2575 275 2573 273 2572.5 269.5Z" fill="#34495e"/><path d="M2562.5 288.5H2569L2575 291" stroke="#34495e" stroke-width="3.2" stroke-linecap="round" fill="none"/><path d="M2587 294.5C2590 294 2594 297 2596.5 301" stroke="#34495e" stroke-width="3.4" stroke-linecap="round" fill="none"/><path d="M2585 263V276M2596 264.5V277.5M2607 273V289" stroke="#34495e" stroke-width="4" stroke-linecap="round"/></svg><svg style="left:2650px;top:262px" width="70" height="70" viewBox="2650 262 70 70" shape-rendering="crispEdges"><rect x="2665.32" y="268.50" width="4.95" height="4.95" fill="#34495e"/><rect x="2670.23" y="268.50" width="4.95" height="4.95" fill="#34495e"/><rect x="2675.14" y="268.50" width="4.95" height="4.95" fill="#34495e"/><rect x="2680.05" y="268.50" width="4.95" height="4.95" fill="#34495e"/><rect x="2660.41" y="273.41" width="4.95" height="4.95" fill="#34495e"/><rect x="2684.96" y="273.41" width="4.95" height="4.95" fill="#34495e"/><rect x="2689.87" y="273.41" width="4.95" height="4.95" fill="#34495e"/><rect x="2665.32" y="278.32" width="4.95" height="4.95" fill="#34495e"/><rect x="2670.23" y="278.32" width="4.95" height="4.95" fill="#34495e"/><rect x="2675.14" y="278.32" width="4.95" height="4.95" fill="#34495e"/><rect x="2694.78" y="278.32" width="4.95" height="4.95" fill="#34495e"/><rect x="2699.69" y="278.32" width="4.95" height="4.95" fill="#34495e"/><rect x="2680.05" y="283.23" width="4.95" height="4.95" fill="#34495e"/><rect x="2694.78" y="283.23" width="4.95" height="4.95" fill="#34495e"/><rect x="2699.69" y="283.23" width="4.95" height="4.95" fill="#34495e"/><rect x="2684.96" y="288.14" width="4.95" height="4.95" fill="#34495e"/><rect x="2704.60" y="288.14" width="4.95" height="4.95" fill="#34495e"/><rect x="2680.05" y="293.05" width="4.95" height="4.95" fill="#34495e"/><rect x="2684.96" y="293.05" width="4.95" height="4.95" fill="#34495e"/><rect x="2689.87" y="293.05" width="4.95" height="4.95" fill="#34495e"/><rect x="2704.60" y="293.05" width="4.95" height="4.95" fill="#34495e"/><rect x="2675.14" y="297.96" width="4.95" height="4.95" fill="#34495e"/><rect x="2684.96" y="297.96" width="4.95" height="4.95" fill="#34495e"/><rect x="2694.78" y="297.96" width="4.95" height="4.95" fill="#34495e"/><rect x="2709.51" y="297.96" width="4.95" height="4.95" fill="#34495e"/><rect x="2670.23" y="302.87" width="4.95" height="4.95" fill="#34495e"/><rect x="2680.05" y="302.87" width="4.95" height="4.95" fill="#34495e"/><rect x="2699.69" y="302.87" width="4.95" height="4.95" fill="#34495e"/><rect x="2709.51" y="302.87" width="4.95" height="4.95" fill="#34495e"/><rect x="2665.32" y="307.78" width="4.95" height="4.95" fill="#34495e"/><rect x="2675.14" y="307.78" width="4.95" height="4.95" fill="#34495e"/><rect x="2699.69" y="307.78" width="4.95" height="4.95" fill="#34495e"/><rect x="2709.51" y="307.78" width="4.95" height="4.95" fill="#34495e"/><rect x="2660.41" y="312.69" width="4.95" height="4.95" fill="#34495e"/><rect x="2670.23" y="312.69" width="4.95" height="4.95" fill="#34495e"/><rect x="2699.69" y="312.69" width="4.95" height="4.95" fill="#34495e"/><rect x="2709.51" y="312.69" width="4.95" height="4.95" fill="#34495e"/><rect x="2655.50" y="317.60" width="4.95" height="4.95" fill="#34495e"/><rect x="2665.32" y="317.60" width="4.95" height="4.95" fill="#34495e"/><rect x="2704.60" y="317.60" width="4.95" height="4.95" fill="#34495e"/><rect x="2655.50" y="322.51" width="4.95" height="4.95" fill="#34495e"/><rect x="2660.41" y="322.51" width="4.95" height="4.95" fill="#34495e"/></svg><svg style="left:2757px;top:277px" width="54" height="42" viewBox="0 0 54 42"><rect x="0" y="10" width="54" height="32" rx="2" fill="#34495e"/><rect x="8" y="0" width="14" height="12" rx="2" fill="#34495e"/><rect x="30" y="0" width="14" height="12" rx="2" fill="#34495e"/></svg><svg style="left:2863px;top:270px" width="64" height="70" viewBox="0 0 64 70"><circle cx="22" cy="17" r="12" fill="none" stroke="#34495e" stroke-width="3"/><path d="M2 61V50c0-12 10-19 20-19 7 0 13 3 17 9" fill="none" stroke="#34495e" stroke-width="3"/><path d="M2 61h34" stroke="#34495e" stroke-width="3"/><circle cx="48" cy="55" r="14" fill="#34495e"/><path d="M48 47v16M40 55h16" stroke="#fff" stroke-width="3.5"/></svg><svg style="left:2939px;top:251px" width="92" height="92" viewBox="0 0 92 92"><defs><clipPath id="av"><circle cx="46" cy="46" r="45"/></clipPath><filter id="bl"><feGaussianBlur stdDeviation="1.5"/></filter></defs><circle cx="46" cy="46" r="45" fill="#5b85d6"/><g clip-path="url(#av)" filter="url(#bl)"><circle cx="46" cy="34" r="20" fill="#e8effa"/><ellipse cx="46" cy="92" rx="30" ry="34" fill="#e8effa"/></g></svg><div class="a" style="left:496px;top:347px;width:2px;height:92px;background:#dde1e6"></div><div class="a" style="left:690px;top:347px;width:2px;height:92px;background:#dde1e6"></div><div class="a" style="left:1548px;top:347px;width:2px;height:92px;background:#dde1e6"></div><div class="a" style="left:1694px;top:347px;width:2px;height:92px;background:#dde1e6"></div><div class="a" style="left:1984px;top:347px;width:2px;height:92px;background:#dde1e6"></div><div class="a" style="left:2274px;top:347px;width:2px;height:92px;background:#dde1e6"></div><div class="a" style="left:2468px;top:347px;width:2px;height:92px;background:#dde1e6"></div><svg style="left:135px;top:369px" width="50" height="50" viewBox="0 0 50 50"><rect x="2" y="2" width="34" height="33" fill="none" stroke="#c5cdd6" stroke-width="3"/><rect x="14" y="15" width="34" height="33" fill="#efeff2" stroke="#c5cdd6" stroke-width="3"/></svg><svg style="left:231px;top:369px" width="46" height="50" viewBox="0 0 46 50"><rect x="2" y="6" width="31" height="42" fill="none" stroke="#c5cdd6" stroke-width="3"/><rect x="11" y="2" width="15" height="8" rx="2" fill="#c5cdd6"/><rect x="16" y="1" width="5" height="4" fill="#efeff2"/><rect x="20" y="18" width="24" height="23" fill="#efeff2" stroke="#c5cdd6" stroke-width="3"/></svg><svg style="left:324px;top:368px" width="56" height="56" viewBox="0 0 56 56"><path d="M4 16l22-4 6 34-22 4Z" fill="#efeff2" stroke="#c5cdd6" stroke-width="3"/><path d="M12 12l20-3 5 34-20 3Z" fill="#efeff2" stroke="#c5cdd6" stroke-width="3"/><rect x="20" y="2" width="34" height="34" rx="3" fill="#efeff2" stroke="#c5cdd6" stroke-width="4"/></svg><svg style="left:425px;top:364px" width="46" height="56" viewBox="0 0 46 56"><rect x="1" y="9" width="44" height="5" rx="2.5" fill="#c5cdd6"/><path d="M16 9V5a3 3 0 0 1 3-3h8a3 3 0 0 1 3 3v4" fill="none" stroke="#c5cdd6" stroke-width="3"/><path d="M5 16v30a8 8 0 0 0 8 8h20a8 8 0 0 0 8-8V16" fill="none" stroke="#c5cdd6" stroke-width="5"/><path d="M15 21v22M23 21v22M31 21v22" stroke="#c5cdd6" stroke-width="2.4"/></svg><svg style="left:525px;top:379px" width="44" height="28" viewBox="0 0 44 28"><path d="M0 13L16 1v8c14 0 24 6 26 18-5-6-14-8-26-8v8Z" fill="#c5cdd6"/></svg><svg style="left:619px;top:379px" width="44" height="28" viewBox="0 0 44 28"><path d="M44 13L28 1v8C14 9 4 15 2 27c5-6 14-8 26-8v8Z" fill="#c5cdd6"/></svg><svg style="left:1571px;top:366px" width="42" height="58" viewBox="0 0 42 58"><path d="M21 3a17 17 0 0 0-10 31c3 2 3 5 3 7v3h14v-3c0-2 0-5 3-7A17 17 0 0 0 21 3Z" fill="none" stroke="#c5cdd6" stroke-width="3.4"/><path d="M11 16a10 10 0 0 1 6-7" stroke="#c5cdd6" stroke-width="2.6" fill="none"/><rect x="14" y="47" width="14" height="3" fill="#c5cdd6"/><rect x="15" y="52" width="12" height="3" rx="1.5" fill="#c5cdd6"/></svg><div class="a" style="left:1634px;top:370px;width:3px;height:47px;background:#d8dde3;border-radius:1px"></div><svg style="left:1653px;top:386px" width="22" height="12" viewBox="0 0 22 12"><path d="M0 0H22L11 11Z" fill="#1e2a2e"/></svg><svg style="left:1715px;top:365px" width="58" height="58" viewBox="0 0 58 58"><g fill="#c5cdd6"><rect x="0" y="0" width="6" height="6" rx="1.5"/><rect x="52" y="0" width="6" height="6" rx="1.5"/><rect x="0" y="52" width="6" height="6" rx="1.5"/><rect x="52" y="52" width="6" height="6" rx="1.5"/><rect x="10" y="1" width="38" height="4" rx="2"/><rect x="10" y="53" width="38" height="4" rx="2"/><rect x="1" y="10" width="4" height="38" rx="2"/><rect x="53" y="10" width="4" height="38" rx="2"/><rect x="9" y="10" width="22" height="22" rx="2"/></g><circle cx="35" cy="35" r="11.5" fill="none" stroke="#c5cdd6" stroke-width="4.5"/><circle cx="35" cy="35" r="9" fill="#efeff2"/></svg><svg style="left:1814px;top:368px" width="52" height="52" viewBox="0 0 52 52"><rect x="1" y="1" width="32" height="32" rx="2" fill="#c5cdd6"/><circle cx="31" cy="31" r="19" fill="#c5cdd6"/></svg><svg style="left:1907px;top:365px" width="58" height="58" viewBox="0 0 58 58"><rect x="2" y="2" width="24" height="24" rx="2" fill="#c5cdd6"/><circle cx="40" cy="42" r="12" fill="none" stroke="#c5cdd6" stroke-width="4.5"/><g stroke="#c5cdd6" stroke-width="3.5" stroke-linecap="round"><path d="M33 3l-2 7M44 8l-3 5M50 19l-6 2M2 34l7-2M10 45l4-4M19 52l1-6"/></g></svg><svg style="left:2014px;top:367px" width="42" height="54" viewBox="0 0 42 54"><rect x="1" y="1" width="4" height="52" rx="2" fill="#c5cdd6"/><rect x="12" y="6" width="28" height="14" rx="1" fill="none" stroke="#c5cdd6" stroke-width="3.4"/><rect x="12" y="30" width="18" height="15" rx="1" fill="none" stroke="#c5cdd6" stroke-width="3.4"/></svg><svg style="left:2098px;top:363px" width="62" height="62" viewBox="0 0 62 62"><rect x="28" y="0" width="5" height="62" rx="2.5" fill="#c5cdd6"/><path d="M22 14L2 50h20Z" fill="none" stroke="#c5cdd6" stroke-width="2.4" stroke-linejoin="round"/><path d="M38 12l22 38H38Z" fill="#c5cdd6"/><path d="M42 28l11 19H42Z" fill="#efeff2"/></svg><svg style="left:2196px;top:363px" width="60" height="60" viewBox="0 0 60 60"><path d="M10 34L4 20a20 20 0 0 1 37-16l7 14-10 5-7-14a9 9 0 0 0-17 7l7 14Z" fill="none" stroke="#c5cdd6" stroke-width="3.6" stroke-linejoin="round"/><path d="M8 30l10-5 4 8-10 5Z" fill="#c5cdd6"/><path d="M38 19l10-5 4 8-10 5Z" fill="#c5cdd6"/><g fill="#c5cdd6"><circle cx="3" cy="50" r="2.2"/><circle cx="10" cy="56" r="2.2"/><circle cx="18" cy="57" r="2.2"/><circle cx="26" cy="54" r="2.2"/><circle cx="34" cy="51" r="2.2"/><circle cx="42" cy="50" r="2.2"/><circle cx="50" cy="53" r="2.2"/><circle cx="57" cy="58" r="2.2"/></g></svg><svg style="left:2297px;top:367px" width="56" height="54" viewBox="0 0 56 54"><path d="M2 18L24 2l12 18-22 15Z" fill="none" stroke="#c5cdd6" stroke-width="3.5" stroke-linejoin="round"/><path d="M6 38l30-18 18 10-40 22Z" fill="none" stroke="#c5cdd6" stroke-width="3.5" stroke-linejoin="round"/><path d="M15 45l-4-7M24 40l-4-7M33 35l-4-7M42 30l-4-6" stroke="#c5cdd6" stroke-width="2.6"/></svg><svg style="left:2395px;top:367px" width="50" height="52" viewBox="0 0 50 52"><g fill="none" stroke="#c5cdd6" stroke-width="3.4" stroke-linejoin="round" stroke-linecap="round"><path d="M24.8 2.7V17M16.6 10.4L24.8 18 33.2 10.4"/><path d="M18.5 18.6H13.3V40M31 18.6H36.6V40"/><path d="M8.5 29.5L2 49.6H48L41.5 29.5"/><path d="M5 40H45M14.5 40V49.6M25.2 40V49.6M35.7 40V49.6"/></g></svg><div class="a" style="left:2495px;top:363px;width:163px;height:60px;box-sizing:border-box;border:2px solid #dcdfe4;border-radius:5px;background:#f0f0f3;font-size:30px;line-height:56px;text-align:center;color:#2c3d50;letter-spacing:0.5px">Import</div><div class="a" style="left:2671px;top:363px;width:162px;height:60px;box-sizing:border-box;border:2px solid #dcdfe4;border-radius:5px;background:#f0f0f3;font-size:30px;line-height:56px;text-align:center;color:#2c3d50;letter-spacing:0.5px">Export</div><div class="a" style="left:2846px;top:363px;width:163px;height:60px;box-sizing:border-box;border:2px solid #dcdfe4;border-radius:5px;background:#f0f0f3;font-size:30px;line-height:56px;text-align:center;color:#2c3d50;letter-spacing:0.5px">Send To</div><svg style="left:160px;top:480px" width="160" height="180" viewBox="160 480 160 180"><defs><linearGradient id="fr" x1="0" y1="0" x2="0" y2="1"><stop offset="0" stop-color="#fdfdfd"/><stop offset="1" stop-color="#e2e2e3"/></linearGradient></defs><path d="M185.5 642H289.5L286 647H189Z" fill="#bdbdbd"/><path d="M185 493.6H290.3L303.1 567.6H172.3Z" fill="#fefefe" stroke="#cfcfcf" stroke-width="1.4"/><path d="M172.3 567.6H303.1L290.3 641H185Z" fill="url(#fr)" stroke="#cfcfcf" stroke-width="1.4"/><path d="M185 493.6H290.3" stroke="#dcdcdc" stroke-width="3.5"/><path d="M173 567.6H302.5" stroke="#dddddd" stroke-width="3.5"/><text x="239" y="535.7" text-anchor="middle" font-family="Liberation Sans" font-weight="bold" font-size="22" fill="#a2a6ad" letter-spacing="2.2">TOP</text><text x="239.5" y="616" text-anchor="middle" font-family="Liberation Sans" font-weight="bold" font-size="20" fill="#a2a6ad" letter-spacing="2.6">FRONT</text></svg><div class="a" style="left:128px;top:677.7px;width:104px;height:104px;box-sizing:border-box;border-radius:52px;border:3.5px solid #e4e6e8;background:#fff"></div><div class="a" style="left:128px;top:789.5px;width:104px;height:104px;box-sizing:border-box;border-radius:52px;border:3.5px solid #e4e6e8;background:#fff"></div><div class="a" style="left:128px;top:901.3px;width:104px;height:104px;box-sizing:border-box;border-radius:52px;border:3.5px solid #e4e6e8;background:#fff"></div><div class="a" style="left:128px;top:1013.1px;width:104px;height:104px;box-sizing:border-box;border-radius:52px;border:3.5px solid #e4e6e8;background:#fff"></div><div class="a" style="left:128px;top:1124.9px;width:104px;height:104px;box-sizing:border-box;border-radius:52px;border:3.5px solid #e4e6e8;background:#fff"></div><svg style="left:150px;top:699.7px" width="60" height="60" viewBox="0 0 60 60"><path d="M30 6.3L4.4 33.3H13.7V53.9H24.5V35.5H35.2V53.9H46.3V33.3H55.6Z" fill="#bcdcf7" stroke="#000" stroke-width="2.8" stroke-linejoin="round"/></svg><svg style="left:150px;top:811.5px" width="60" height="60" viewBox="0 0 60 60"><g fill="none" stroke="#2c3e50" stroke-width="3.2" stroke-linecap="round"><path d="M6 12V8a2 2 0 0 1 2-2h5M47 6h5a2 2 0 0 1 2 2v4M54 48v4a2 2 0 0 1-2 2h-5M13 54H8a2 2 0 0 1-2-2v-4"/></g><path d="M30 15L45 30 30 45 15 30Z" fill="#bcdcf7" stroke="#2c3e50" stroke-width="3.6" stroke-linejoin="round"/></svg><svg style="left:152px;top:925.3px" width="56" height="56" viewBox="0 0 56 56"><path d="M28 8.5V47.5M8.5 28H47.5" stroke="#111" stroke-width="4.2" stroke-linecap="round"/></svg><svg style="left:152px;top:1037.1px" width="56" height="56" viewBox="0 0 56 56"><path d="M8.5 28H47.5" stroke="#111" stroke-width="4.2" stroke-linecap="round"/></svg><svg style="left:150px;top:1146.9px" width="60" height="60" viewBox="0 0 60 60"><path d="M30 38V55" stroke="#2c3e50" stroke-width="3.4"/><path d="M30 38L46 29V47L30 55Z" fill="#bcdcf7"/><path d="M14 21L30 13 46 21V47L30 55 14 47Z M14 21L30 29 46 21M30 29V55" fill="none" stroke="#2c3e50" stroke-width="3.4" stroke-linejoin="round"/><path d="M4 41L14 47M56 41L46 47" stroke="#2c3e50" stroke-width="3.4" stroke-linecap="round"/></svg><svg style="left:2520px;top:460px" width="510" height="110" viewBox="2520 460 510 110"><path d="M2533 478.5L2611 472.2V556L2537 549.8Z" fill="none" stroke="#3a87c6" stroke-width="4" stroke-linejoin="round"/><path d="M2546 477.45 L2549.33 550.833" stroke="#3a87c6" stroke-width="1.6"/><path d="M2559 476.4 L2561.67 551.867" stroke="#3a87c6" stroke-width="1.6"/><path d="M2572 475.35 L2574 552.9" stroke="#3a87c6" stroke-width="2.8"/><path d="M2585 474.3 L2586.33 553.933" stroke="#3a87c6" stroke-width="1.6"/><path d="M2598 473.25 L2598.67 554.967" stroke="#3a87c6" stroke-width="1.6"/><path d="M2533.67 490.383 L2611 486.167" stroke="#3a87c6" stroke-width="1.6"/><path d="M2534.33 502.267 L2611 500.133" stroke="#3a87c6" stroke-width="1.6"/><path d="M2535 514.15 L2611 514.1" stroke="#3a87c6" stroke-width="2.8"/><path d="M2535.67 526.033 L2611 528.067" stroke="#3a87c6" stroke-width="1.6"/><path d="M2536.33 537.917 L2611 542.033" stroke="#3a87c6" stroke-width="1.6"/><path d="M2717.5 478L2737.5 477.2L2740.5 532L2799 535V557L2722.5 550.5Z" fill="none" stroke="#3a87c6" stroke-width="4" stroke-linejoin="round"/><path d="M2729 492H2737M2727 505H2738M2729 518H2738M2727 531H2738M2741 531V544M2752 536V545M2765 537V548M2782 538V546" stroke="#3a87c6" stroke-width="2"/><path d="M2914 476L2967 474Q2974 474 2974 481L2971 536Q2971 542 2965 542L2949 542L2938 556L2931 541L2916 538Q2910 537 2910 531L2909 482Q2909 476 2914 476Z" fill="none" stroke="#3a87c6" stroke-width="4" stroke-linejoin="round"/><path d="M2926 494L2954 493M2926 503L2955 504M2926 512L2955 513M2926 521L2946 522" stroke="#3a87c6" stroke-width="2.6" stroke-linecap="round"/></svg><div class="a" style="left:2503px;top:597px;width:413px;height:91px;box-sizing:border-box;border:2px solid #e1e3e8;border-radius:6px;background:#f4f4f7;box-shadow:0 3px 5px rgba(0,0,0,0.06)"></div><div class="a" style="left:2526px;top:628px;font-size:30px;line-height:36px;color:#2c3d50;white-space:nowrap">Basic Shapes</div><svg style="left:2881px;top:630px" width="16" height="26" viewBox="0 0 16 26"><path d="M8 0L16 9H0Z M8 26L16 17H0Z" fill="#111"/></svg><div class="a" style="left:2922px;top:597px;width:91px;height:91px;box-sizing:border-box;border:2px solid #e1e3e8;border-radius:6px;background:#f4f4f7;box-shadow:0 3px 5px rgba(0,0,0,0.06)"></div><svg style="left:2941px;top:618px" width="50" height="50" viewBox="0 0 50 50"><circle cx="20" cy="20" r="16" fill="none" stroke="#111" stroke-width="4"/><path d="M32 32L44 44" stroke="#111" stroke-width="4.4" stroke-linecap="round"/></svg><div class="a" style="left:2502px;top:710px;width:164px;height:184px;border-radius:7px;background:#f5f6f8"></div><div class="a" style="left:2676px;top:710px;width:164px;height:184px;border-radius:7px;background:#f5f6f8"></div><div class="a" style="left:2850px;top:710px;width:164px;height:184px;border-radius:7px;background:#f5f6f8"></div><div class="a" style="left:2502px;top:908px;width:164px;height:184px;border-radius:7px;background:#f5f6f8"></div><div class="a" style="left:2676px;top:908px;width:164px;height:184px;border-radius:7px;background:#f5f6f8"></div><div class="a" style="left:2850px;top:908px;width:164px;height:184px;border-radius:7px;background:#f5f6f8"></div><div class="a" style="left:2502px;top:1116px;width:164px;height:184px;border-radius:7px;background:#f5f6f8"></div><div class="a" style="left:2676px;top:1116px;width:164px;height:184px;border-radius:7px;background:#f5f6f8"></div><div class="a" style="left:2850px;top:1116px;width:164px;height:184px;border-radius:7px;background:#f5f6f8"></div><div class="a" style="left:2502px;top:1324px;width:164px;height:184px;border-radius:7px;background:#f5f6f8"></div><div class="a" style="left:2676px;top:1324px;width:164px;height:184px;border-radius:7px;background:#f5f6f8"></div><div class="a" style="left:2850px;top:1324px;width:164px;height:184px;border-radius:7px;background:#f5f6f8"></div><div class="a" style="left:2502px;top:1532px;width:164px;height:184px;border-radius:7px;background:#f5f6f8"></div><div class="a" style="left:2676px;top:1532px;width:164px;height:184px;border-radius:7px;background:#f5f6f8"></div><div class="a" style="left:2850px;top:1532px;width:164px;height:184px;border-radius:7px;background:#f5f6f8"></div><div class="a" style="left:2502px;top:1740px;width:164px;height:184px;border-radius:7px;background:#f5f6f8"></div><div class="a" style="left:2676px;top:1740px;width:164px;height:184px;border-radius:7px;background:#f5f6f8"></div><div class="a" style="left:2850px;top:1740px;width:164px;height:184px;border-radius:7px;background:#f5f6f8"></div><div class="a" style="left:2502px;top:1948px;width:164px;height:184px;border-radius:7px;background:#f5f6f8"></div><div class="a" style="left:2676px;top:1948px;width:164px;height:184px;border-radius:7px;background:#f5f6f8"></div><div class="a" style="left:2850px;top:1948px;width:164px;height:184px;border-radius:7px;background:#f5f6f8"></div><div class="a" style="left:3008px;top:710px;width:16px;height:893px;border-radius:8px;background:#c4c4c6"></div><div class="a" style="left:2462px;top:1156px;width:32px;height:94px;box-sizing:border-box;border:2px solid #d7dde5;border-right:none;background:#f3f4f6"></div><svg style="left:2470px;top:1179px" width="20" height="48" viewBox="0 0 20 48"><path d="M4 3L15 24 4 45" stroke="#000" stroke-width="3.6" fill="none"/></svg><svg style="left:0;top:0" width="0" height="0"><defs><pattern id="hs" width="16" height="16" patternUnits="userSpaceOnUse" patternTransform="rotate(-45)"><rect width="16" height="16" fill="#d5d8df"/><rect width="8" height="16" fill="#b9bdc5"/></pattern><pattern id="hs2" width="16" height="16" patternUnits="userSpaceOnUse" patternTransform="rotate(-45)"><rect width="16" height="16" fill="#b1b5bd"/><rect width="8" height="16" fill="#9ca0a9"/></pattern><pattern id="hs3" width="16" height="16" patternUnits="userSpaceOnUse" patternTransform="rotate(-45)"><rect width="16" height="16" fill="#c9ccd3"/><rect width="8" height="16" fill="#b0b4bc"/></pattern><radialGradient id="sph" cx="0.62" cy="0.35" r="0.7"><stop offset="0" stop-color="#52a9e0"/><stop offset="0.6" stop-color="#3a8cc6"/><stop offset="1" stop-color="#2a6ea3"/></radialGradient><radialGradient id="gsph" cx="0.6" cy="0.35" r="0.75"><stop offset="0" stop-color="#000" stop-opacity="0"/><stop offset="1" stop-color="#000" stop-opacity="0.18"/></radialGradient><linearGradient id="cyl" x1="0" y1="0" x2="1" y2="0"><stop offset="0" stop-color="#b3602a"/><stop offset="0.5" stop-color="#c97634"/><stop offset="1" stop-color="#d88a3e"/></linearGradient><linearGradient id="cylg" x1="0" y1="0" x2="1" y2="0"><stop offset="0" stop-color="#000" stop-opacity="0.12"/><stop offset="1" stop-color="#000" stop-opacity="0"/></linearGradient><radialGradient id="cone" cx="0.6" cy="0.3" r="0.9"><stop offset="0" stop-color="#8a4cb0"/><stop offset="1" stop-color="#5e2f85"/></radialGradient><radialGradient id="mag" cx="0.6" cy="0.3" r="0.8"><stop offset="0" stop-color="#d8399d"/><stop offset="1" stop-color="#a5207a"/></radialGradient><radialGradient id="tor" cx="0.5" cy="0.3" r="0.7"><stop offset="0" stop-color="#4aa8e0"/><stop offset="1" stop-color="#2b78b3"/></radialGradient><radialGradient id="halo"><stop offset="0" stop-color="#000" stop-opacity="0.11"/><stop offset="0.5" stop-color="#000" stop-opacity="0.06"/><stop offset="1" stop-color="#000" stop-opacity="0"/></radialGradient><filter id="sb"><feGaussianBlur stdDeviation="0.4"/></filter></defs></svg><svg style="left:2502px;top:710px" width="164" height="184" viewBox="2502 710 164 184"><ellipse cx="2582" cy="805" rx="70" ry="70" fill="url(#halo)"/><path d="M2561.3 746.1L2632.6 756.6L2612.3 793.3L2530.2 780.5Z" fill="url(#hs)" stroke="#6f737a" stroke-width="1.8" stroke-linejoin="round"/><path d="M2530.2 780.5L2612.3 793.3L2609.9 862.6L2535 847Z" fill="url(#hs2)" stroke="#6f737a" stroke-width="1.8" stroke-linejoin="round"/><path d="M2612.3 793.3L2632.6 756.6L2629 820L2609.9 862.6Z" fill="url(#hs3)" stroke="#6f737a" stroke-width="1.8" stroke-linejoin="round"/></svg><svg style="left:2502px;top:908px" width="164" height="184" viewBox="2502 908 164 184"><ellipse cx="2582" cy="1003" rx="70" ry="70" fill="url(#halo)"/><path d="M2561.3 944.1L2632.6 954.6L2612.3 991.3L2530.2 978.5Z" fill="#be2d2f" stroke="#6e1519" stroke-width="1.8" stroke-linejoin="round"/><path d="M2530.2 978.5L2612.3 991.3L2609.9 1060.6L2535 1045Z" fill="#a2232a" stroke="#6e1519" stroke-width="1.8" stroke-linejoin="round"/><path d="M2612.3 991.3L2632.6 954.6L2629 1018L2609.9 1060.6Z" fill="#b0282b" stroke="#6e1519" stroke-width="1.8" stroke-linejoin="round"/></svg><svg style="left:2676px;top:710px" width="164" height="184" viewBox="2676 710 164 184"><ellipse cx="2758" cy="805" rx="70" ry="70" fill="url(#halo)"/><path d="M2716.5 769.5 V837.5 A41.5 18.5 0 0 0 2799.5 837.5 V769.5 Z" fill="url(#hs3)" stroke="#6f737a" stroke-width="1.8"/><ellipse cx="2758" cy="769.5" rx="41.5" ry="18.5" fill="url(#hs)" stroke="#6f737a" stroke-width="1.8"/></svg><svg style="left:2676px;top:908px" width="164" height="184" viewBox="2676 908 164 184"><ellipse cx="2758" cy="1003" rx="70" ry="70" fill="url(#halo)"/><path d="M2716.5 966.5 V1035.5 A41.5 18.5 0 0 0 2799.5 1035.5 V966.5 Z" fill="url(#cyl)" stroke="#6e3a12" stroke-width="1.8"/><ellipse cx="2758" cy="966.5" rx="41.5" ry="18.5" fill="#d27d35" stroke="#6e3a12" stroke-width="1.8"/></svg><svg style="left:2850px;top:710px" width="164" height="184" viewBox="2850 710 164 184"><ellipse cx="2932" cy="802" rx="70" ry="70" fill="url(#halo)"/><circle cx="2932" cy="801.6" r="40.5" fill="url(#hs)" stroke="#777" stroke-width="1.8"/><circle cx="2932" cy="801.6" r="40" fill="url(#gsph)" opacity="0.6"/></svg><svg style="left:2850px;top:908px" width="164" height="184" viewBox="2850 908 164 184"><ellipse cx="2932" cy="1000" rx="70" ry="70" fill="url(#halo)"/><circle cx="2932" cy="999.8" r="38.6" fill="url(#sph)" stroke="#1f4f78" stroke-width="1.4"/></svg><svg style="left:2502px;top:1116px" width="164" height="184" viewBox="2502 1116 164 184"><ellipse cx="2585" cy="1206" rx="60" ry="60" fill="url(#halo)"/><path d="M2553 1244C2549 1220 2553 1195 2565 1180 2575 1170 2590 1170 2597 1172L2600 1167 2610 1174 2620 1183 2619 1192 2614 1212C2610 1228 2598 1234 2580 1240Z" fill="#8a93b8" stroke="#5b6286" stroke-width="1.6"/><path d="M2552 1233C2549 1210 2553 1190 2565 1178 2575 1168 2590 1168 2597 1171L2601 1165 2612 1172 2619 1180 2614 1190 2612 1200C2606 1214 2590 1222 2562 1230Z" fill="#c0c9f5" stroke="#5b6286" stroke-width="1.6"/><path d="M2553 1232L2583 1203" stroke="#6a7296" stroke-width="2.4"/><circle cx="2585" cy="1200" r="9" fill="#6c7397"/></svg><svg style="left:2676px;top:1116px" width="164" height="220" viewBox="2676 1116 164 220"><ellipse cx="2758" cy="1200" rx="55" ry="55" fill="url(#halo)"/><path d="M2758 1140V1158.5M2758 1260V1272.5" stroke="#a35ee0" stroke-width="2.6"/><path d="M2758 1162Q2764 1162 2765 1176Q2768 1200 2790 1208Q2806 1212 2806.6 1221Q2806 1232 2775 1234Q2768 1240 2762 1252Q2758 1257 2754 1252Q2748 1240 2741 1234Q2710 1232 2709.6 1221Q2710 1212 2726 1208Q2748 1200 2751 1176Q2752 1162 2758 1162Z" fill="#c9efb3" stroke="#8db67a" stroke-width="1.2"/><path d="M2709.8 1221Q2712 1231 2740 1233Q2758 1235 2776 1233Q2804 1231 2806.4 1221Q2800 1227 2758 1228Q2716 1227 2709.8 1221Z" fill="#b5dc9c"/><path d="M2754 1170Q2758 1166 2762 1170" stroke="#e2fbd2" stroke-width="2" fill="none"/></svg><svg style="left:2850px;top:1116px" width="164" height="184" viewBox="2850 1116 164 184"><ellipse cx="2930" cy="1210" rx="60" ry="60" fill="url(#halo)"/><path d="M2893 1203L2895 1238Q2898 1242 2903 1240L2905 1212 2907 1247Q2913 1252 2920 1248L2922 1222Q2935 1248 2958 1262Q2964 1264 2964 1256L2966 1186 2956 1186 2956 1218Q2946 1215 2940 1200 2932 1185 2922 1185 2913 1192 2912 1200 2906 1194 2898 1196Z" fill="#8fb0d2" stroke="#7595b8" stroke-width="1"/><path d="M2898 1206Q2900 1196 2908 1197Q2914 1199 2913 1208Q2916 1186 2924 1186Q2932 1186 2938 1200Q2946 1220 2958 1222Q2952 1205 2954 1190Q2957 1178 2960 1183" fill="none" stroke="#7595b8" stroke-width="12.5" stroke-linecap="round" stroke-linejoin="round"/><path d="M2898 1206Q2900 1196 2908 1197Q2914 1199 2913 1208Q2916 1186 2924 1186Q2932 1186 2938 1200Q2946 1220 2958 1222Q2952 1205 2954 1190Q2957 1178 2960 1183" fill="none" stroke="#a9c7e5" stroke-width="10" stroke-linecap="round" stroke-linejoin="round"/><rect x="2959" y="1183" width="7" height="12" rx="3" fill="#a9c7e5" stroke="#7595b8" stroke-width="1"/></svg><div class="a" style="left:2688px;top:1274px;width:140px;height:44px;border-radius:22px;background:#52a85a;color:#fff;font-weight:bold;font-size:24px;line-height:44px;text-align:center;box-shadow:0 2px 4px rgba(0,0,0,0.2)">New!</div><svg style="left:2502px;top:1324px" width="164" height="184" viewBox="2502 1324 164 184"><ellipse cx="2584" cy="1410" rx="60" ry="60" fill="url(#halo)"/><path d="M2584 1380.3L2546.5 1447Q2550 1471 2584 1471Q2618 1471 2621.5 1447Z" fill="url(#cone)" stroke="#3f1f5c" stroke-width="1.6" stroke-linejoin="round"/></svg><svg style="left:2676px;top:1324px" width="164" height="184" viewBox="2676 1324 164 184"><ellipse cx="2758" cy="1410" rx="60" ry="60" fill="url(#halo)"/><path d="M2757.7 1381.2L2709.8 1461.5 2784.1 1476.4Z" fill="#d8bf3a" stroke="#7a6a10" stroke-width="1.8" stroke-linejoin="round"/><path d="M2757.7 1381.2L2784.1 1476.4 2801.7 1433.3Z" fill="#ecd547" stroke="#7a6a10" stroke-width="1.8" stroke-linejoin="round"/></svg><svg style="left:2850px;top:1324px" width="164" height="184" viewBox="2850 1324 164 184"><ellipse cx="2930" cy="1405" rx="62" ry="58" fill="url(#halo)"/><path d="M2943 1381.9L2910.3 1405.3 2881.7 1444.8 2918.5 1419.8Z" fill="#38692b" stroke="#245a18" stroke-width="1.4" stroke-linejoin="round"/><path d="M2881.7 1444.8L2918.5 1419.8 2958.6 1461Z" fill="#4a843a" stroke="#245a18" stroke-width="1.4" stroke-linejoin="round"/><path d="M2943 1381.9L2977 1418.7 2958.6 1461 2918.5 1419.8Z" fill="#64b053" stroke="#245a18" stroke-width="1.6" stroke-linejoin="round"/></svg><svg style="left:2502px;top:1532px" width="164" height="184" viewBox="2502 1532 164 184"><ellipse cx="2586" cy="1610" rx="62" ry="58" fill="url(#halo)"/><g transform="translate(2538,1625) rotate(11) skewX(-16)"><text x="0" y="10" font-family="Liberation Sans" font-weight="bold" font-size="46" fill="#8a1b1f" stroke="#6e1519" stroke-width="1" textLength="98" lengthAdjust="spacingAndGlyphs">TEXT</text><text x="0" y="4" font-family="Liberation Sans" font-weight="bold" font-size="46" fill="#c7302f" stroke="#7a1619" stroke-width="1.2" textLength="98" lengthAdjust="spacingAndGlyphs">TEXT</text></g></svg><svg style="left:2676px;top:1532px" width="164" height="184" viewBox="2676 1532 164 184"><ellipse cx="2760" cy="1610" rx="62" ry="58" fill="url(#halo)"/><path d="M2708.5 1652L2736 1612Q2750 1589 2770 1589Q2800 1592 2803 1625L2784.5 1668.6Z" fill="#7fc2d0" stroke="#4a808c" stroke-width="1.6" stroke-linejoin="round"/><path d="M2708.5 1652Q2712 1628 2740 1627Q2770 1630 2784.5 1668.6Z" fill="#6098a4" stroke="#4a808c" stroke-width="1.6" stroke-linejoin="round"/></svg><svg style="left:2850px;top:1532px" width="164" height="184" viewBox="2850 1532 164 184"><ellipse cx="2932" cy="1625" rx="62" ry="58" fill="url(#halo)"/><path d="M2893.6 1640A38.3 38.5 0 0 1 2970.3 1640A38.3 23.4 0 0 1 2893.6 1640Z" fill="url(#mag)" stroke="#6a0f4a" stroke-width="1.4"/></svg><svg style="left:2502px;top:1740px" width="164" height="184" viewBox="2502 1740 164 184"><ellipse cx="2584" cy="1830" rx="60" ry="60" fill="url(#halo)"/><ellipse cx="2583.8" cy="1832.7" rx="39" ry="26.7" fill="url(#tor)" stroke="#1e5685" stroke-width="1.6"/><ellipse cx="2584" cy="1834" rx="16" ry="6.5" fill="#f1f2f4" stroke="#1e5685" stroke-width="1.4"/></svg><svg style="left:2676px;top:1740px" width="164" height="184" viewBox="2676 1740 164 184"><ellipse cx="2758" cy="1830" rx="60" ry="60" fill="url(#halo)"/><path d="M2718.3 1825 V1842 A39.7 20 0 0 0 2797.7 1842 V1825 Z" fill="#b9652a" stroke="#6e3a12" stroke-width="1.8"/><ellipse cx="2758" cy="1825" rx="39.7" ry="20" fill="#d4843a" stroke="#6e3a12" stroke-width="1.8"/><ellipse cx="2758" cy="1822" rx="18" ry="9" fill="#a9561f" stroke="#6e3a12" stroke-width="1.4"/><path d="M2742 1826Q2758 1812 2774 1826" fill="#c97634"/></svg><svg style="left:2850px;top:1740px" width="164" height="184" viewBox="2850 1740 164 184"><ellipse cx="2932" cy="1830" rx="60" ry="60" fill="url(#halo)"/><path d="M2893 1826 V1839 A39 21 0 0 0 2971 1839 V1826 Z" fill="#8c6640" stroke="#4d3218" stroke-width="1.8"/><ellipse cx="2932" cy="1826" rx="39" ry="21" fill="#a87d52" stroke="#4d3218" stroke-width="1.8"/><ellipse cx="2932" cy="1828" rx="33" ry="16" fill="#e8e8ea" stroke="#5a3c1e" stroke-width="1.6"/></svg><div class="a" style="left:0;top:0;width:2000px;height:2000px;transform-origin:0 0;transform:matrix3d(0.56495000,0.00000000,0,-0.0000000000,-0.28209277,0.13862392,0,-0.0002174402,0,0,1,0,731.800000,802.300000,0,1.00000000)"><svg width="2000" height="2000" viewBox="0 0 2000 2000" style="left:0;top:0"><rect x="0" y="0" width="2000" height="2000" fill="#f4f7f9"/><path d="M10 0V2000M0 10H2000M20 0V2000M0 20H2000M30 0V2000M0 30H2000M40 0V2000M0 40H2000M50 0V2000M0 50H2000M60 0V2000M0 60H2000M70 0V2000M0 70H2000M80 0V2000M0 80H2000M90 0V2000M0 90H2000M110 0V2000M0 110H2000M120 0V2000M0 120H2000M130 0V2000M0 130H2000M140 0V2000M0 140H2000M150 0V2000M0 150H2000M160 0V2000M0 160H2000M170 0V2000M0 170H2000M180 0V2000M0 180H2000M190 0V2000M0 190H2000M210 0V2000M0 210H2000M220 0V2000M0 220H2000M230 0V2000M0 230H2000M240 0V2000M0 240H2000M250 0V2000M0 250H2000M260 0V2000M0 260H2000M270 0V2000M0 270H2000M280 0V2000M0 280H2000M290 0V2000M0 290H2000M310 0V2000M0 310H2000M320 0V2000M0 320H2000M330 0V2000M0 330H2000M340 0V2000M0 340H2000M350 0V2000M0 350H2000M360 0V2000M0 360H2000M370 0V2000M0 370H2000M380 0V2000M0 380H2000M390 0V2000M0 390H2000M410 0V2000M0 410H2000M420 0V2000M0 420H2000M430 0V2000M0 430H2000M440 0V2000M0 440H2000M450 0V2000M0 450H2000M460 0V2000M0 460H2000M470 0V2000M0 470H2000M480 0V2000M0 480H2000M490 0V2000M0 490H2000M510 0V2000M0 510H2000M520 0V2000M0 520H2000M530 0V2000M0 530H2000M540 0V2000M0 540H2000M550 0V2000M0 550H2000M560 0V2000M0 560H2000M570 0V2000M0 570H2000M580 0V2000M0 580H2000M590 0V2000M0 590H2000M610 0V2000M0 610H2000M620 0V2000M0 620H2000M630 0V2000M0 630H2000M640 0V2000M0 640H2000M650 0V2000M0 650H2000M660 0V2000M0 660H2000M670 0V2000M0 670H2000M680 0V2000M0 680H2000M690 0V2000M0 690H2000M710 0V2000M0 710H2000M720 0V2000M0 720H2000M730 0V2000M0 730H2000M740 0V2000M0 740H2000M750 0V2000M0 750H2000M760 0V2000M0 760H2000M770 0V2000M0 770H2000M780 0V2000M0 780H2000M790 0V2000M0 790H2000M810 0V2000M0 810H2000M820 0V2000M0 820H2000M830 0V2000M0 830H2000M840 0V2000M0 840H2000M850 0V2000M0 850H2000M860 0V2000M0 860H2000M870 0V2000M0 870H2000M880 0V2000M0 880H2000M890 0V2000M0 890H2000M910 0V2000M0 910H2000M920 0V2000M0 920H2000M930 0V2000M0 930H2000M940 0V2000M0 940H2000M950 0V2000M0 950H2000M960 0V2000M0 960H2000M970 0V2000M0 970H2000M980 0V2000M0 980H2000M990 0V2000M0 990H2000M1010 0V2000M0 1010H2000M1020 0V2000M0 1020H2000M1030 0V2000M0 1030H2000M1040 0V2000M0 1040H2000M1050 0V2000M0 1050H2000M1060 0V2000M0 1060H2000M1070 0V2000M0 1070H2000M1080 0V2000M0 1080H2000M1090 0V2000M0 1090H2000M1110 0V2000M0 1110H2000M1120 0V2000M0 1120H2000M1130 0V2000M0 1130H2000M1140 0V2000M0 1140H2000M1150 0V2000M0 1150H2000M1160 0V2000M0 1160H2000M1170 0V2000M0 1170H2000M1180 0V2000M0 1180H2000M1190 0V2000M0 1190H2000M1210 0V2000M0 1210H2000M1220 0V2000M0 1220H2000M1230 0V2000M0 1230H2000M1240 0V2000M0 1240H2000M1250 0V2000M0 1250H2000M1260 0V2000M0 1260H2000M1270 0V2000M0 1270H2000M1280 0V2000M0 1280H2000M1290 0V2000M0 1290H2000M1310 0V2000M0 1310H2000M1320 0V2000M0 1320H2000M1330 0V2000M0 1330H2000M1340 0V2000M0 1340H2000M1350 0V2000M0 1350H2000M1360 0V2000M0 1360H2000M1370 0V2000M0 1370H2000M1380 0V2000M0 1380H2000M1390 0V2000M0 1390H2000M1410 0V2000M0 1410H2000M1420 0V2000M0 1420H2000M1430 0V2000M0 1430H2000M1440 0V2000M0 1440H2000M1450 0V2000M0 1450H2000M1460 0V2000M0 1460H2000M1470 0V2000M0 1470H2000M1480 0V2000M0 1480H2000M1490 0V2000M0 1490H2000M1510 0V2000M0 1510H2000M1520 0V2000M0 1520H2000M1530 0V2000M0 1530H2000M1540 0V2000M0 1540H2000M1550 0V2000M0 1550H2000M1560 0V2000M0 1560H2000M1570 0V2000M0 1570H2000M1580 0V2000M0 1580H2000M1590 0V2000M0 1590H2000M1610 0V2000M0 1610H2000M1620 0V2000M0 1620H2000M1630 0V2000M0 1630H2000M1640 0V2000M0 1640H2000M1650 0V2000M0 1650H2000M1660 0V2000M0 1660H2000M1670 0V2000M0 1670H2000M1680 0V2000M0 1680H2000M1690 0V2000M0 1690H2000M1710 0V2000M0 1710H2000M1720 0V2000M0 1720H2000M1730 0V2000M0 1730H2000M1740 0V2000M0 1740H2000M1750 0V2000M0 1750H2000M1760 0V2000M0 1760H2000M1770 0V2000M0 1770H2000M1780 0V2000M0 1780H2000M1790 0V2000M0 1790H2000M1810 0V2000M0 1810H2000M1820 0V2000M0 1820H2000M1830 0V2000M0 1830H2000M1840 0V2000M0 1840H2000M1850 0V2000M0 1850H2000M1860 0V2000M0 1860H2000M1870 0V2000M0 1870H2000M1880 0V2000M0 1880H2000M1890 0V2000M0 1890H2000M1910 0V2000M0 1910H2000M1920 0V2000M0 1920H2000M1930 0V2000M0 1930H2000M1940 0V2000M0 1940H2000M1950 0V2000M0 1950H2000M1960 0V2000M0 1960H2000M1970 0V2000M0 1970H2000M1980 0V2000M0 1980H2000M1990 0V2000M0 1990H2000" stroke="#dbeaf2" stroke-width="1.3" fill="none"/><path d="M0 0V2000M100 0V2000M200 0V2000M300 0V2000M400 0V2000M500 0V2000M600 0V2000M700 0V2000M800 0V2000M900 0V2000M1000 0V2000M1100 0V2000M1200 0V2000M1300 0V2000M1400 0V2000M1500 0V2000M1600 0V2000M1700 0V2000M1800 0V2000M1900 0V2000M2000 0V2000" stroke="#c8e0ec" stroke-width="2.2" fill="none"/><path d="M0 0H2000M0 100H2000M0 200H2000M0 300H2000M0 400H2000M0 500H2000M0 600H2000M0 700H2000M0 800H2000M0 900H2000M0 1000H2000M0 1100H2000M0 1200H2000M0 1300H2000M0 1400H2000M0 1500H2000M0 1600H2000M0 1700H2000M0 1800H2000M0 1900H2000M0 2000H2000" stroke="#d0e5ef" stroke-width="2.2" fill="none"/><path d="M0 0H2000V2000H0Z M34 37V1969H1966V37Z" fill="rgba(150,203,230,0.25)" fill-rule="evenodd"/><rect x="1.5" y="1.5" width="1997" height="1997" fill="none" stroke="#9ccbe0" stroke-width="3"/><text x="73" y="1941" font-family="Liberation Sans" font-weight="bold" font-style="italic" font-size="122" fill="rgba(140,192,220,0.62)">Workplane</text><text x="1938" y="1943" text-anchor="end" font-family="Liberation Sans" font-weight="bold" font-size="50" fill="rgba(140,192,220,0.62)">Millimeters</text></svg></div><div class="a" style="left:2283px;top:1835px;width:178px;height:42px;box-sizing:border-box;border:2px solid #e3e6ea;border-radius:6px;background:#fff;font-size:25px;line-height:38px;text-align:center;color:#64748a">Settings</div><div class="a" style="left:2186px;top:1905px;font-size:24.5px;line-height:30px;color:#2c3d50;white-space:nowrap">Snap Grid</div><div class="a" style="left:2309px;top:1899px;width:152px;height:42px;box-sizing:border-box;border:2px solid #e3e6ea;border-radius:6px;background:#fff"></div><div class="a" style="left:2325px;top:1905px;font-size:24.5px;line-height:30px;color:#64748a;white-space:nowrap">1.0 mm</div><svg style="left:2430px;top:1916px" width="14" height="10" viewBox="0 0 14 10"><path d="M0 9L7 1 14 9Z" fill="#333"/></svg></div></div></body></html>
